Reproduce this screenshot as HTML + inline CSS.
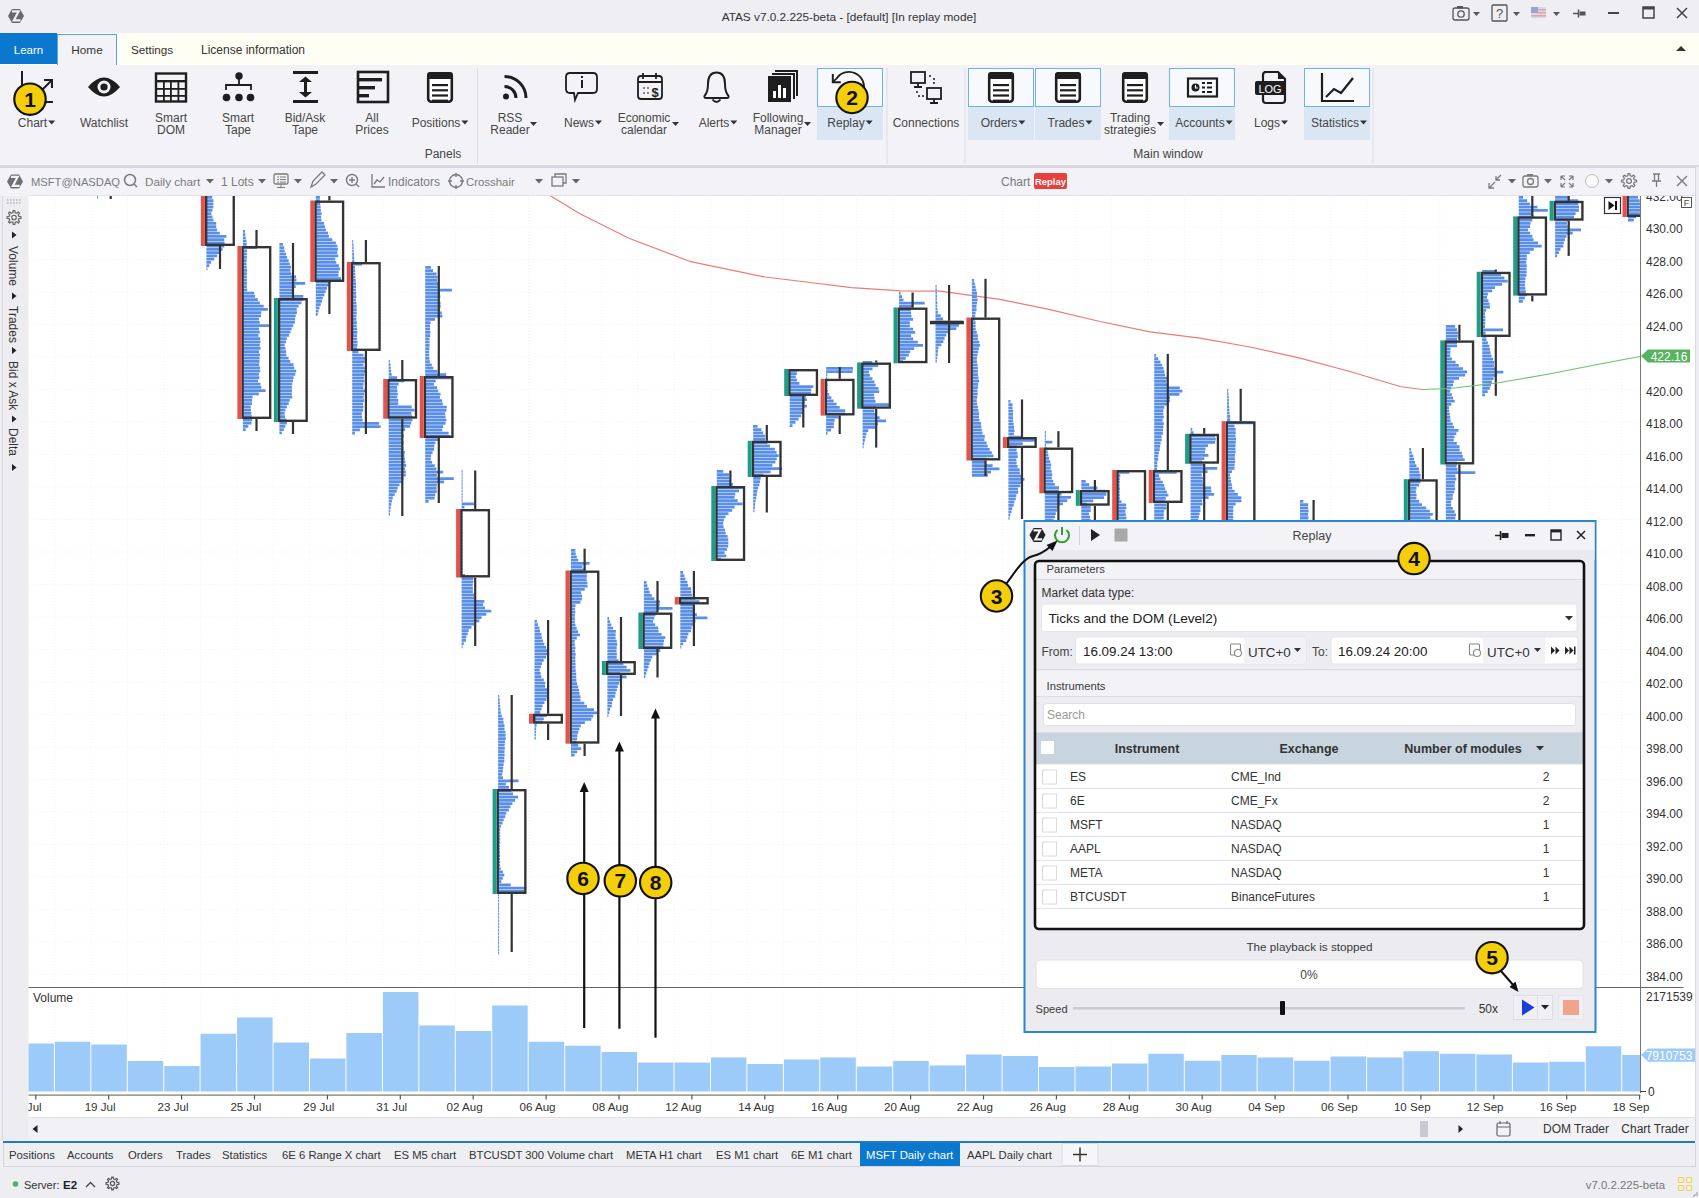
<!DOCTYPE html>
<html><head><meta charset="utf-8"><title>ATAS</title>
<style>html,body{margin:0;padding:0;width:1699px;height:1198px;overflow:hidden;background:#efeef3}
svg{display:block;font-family:"Liberation Sans",sans-serif}</style></head>
<body><svg width="1699" height="1198" viewBox="0 0 1699 1198"><rect x="0" y="0" width="1699" height="33" fill="#efeef3"/><path d="M8.00 16.00L12.00 9.00H20.00L24.00 16.00L20.00 23.00H12.00Z" fill="#68686f"/><path d="M12.00 11.40H18.60L13.80 20.40H20.60" fill="none" stroke="#efeef3" stroke-width="2.20"/><text x="849" y="21" font-size="11.8" fill="#333" text-anchor="middle" font-weight="normal" >ATAS v7.0.2.225-beta - [default] [In replay mode]</text><rect x="1453" y="8" width="16" height="12" rx="2" fill="none" stroke="#555" stroke-width="1.3"/><circle cx="1461" cy="14" r="3.2" fill="none" stroke="#555" stroke-width="1.3"/><rect x="1457" y="6" width="6" height="2.5" fill="#555"/><path d="M1473 12h7l-3.5 4z" fill="#555"/><rect x="1492" y="5" width="15" height="16" rx="1" fill="none" stroke="#555" stroke-width="1.3"/><text x="1499.5" y="18" font-size="13" fill="#555" text-anchor="middle" font-weight="normal" >?</text><path d="M1513 12h7l-3.5 4z" fill="#555"/><rect x="1531" y="7" width="15" height="11" fill="#d8d8e8"/><rect x="1531" y="7" width="7" height="6" fill="#9aa3c8"/><rect x="1531" y="15" width="15" height="1.5" fill="#e2a4a4"/><rect x="1538" y="9" width="8" height="1.5" fill="#e2a4a4"/><rect x="1538" y="12" width="8" height="1.5" fill="#e2a4a4"/><path d="M1553 12h7l-3.5 4z" fill="#555"/><path d="M1573 13.5h5M1578.5 9.5v8" stroke="#555" stroke-width="1.5"/><rect x="1579.5" y="11.5" width="6" height="4" fill="#555"/><rect x="1608" y="12" width="11" height="2" fill="#444"/><rect x="1643" y="7" width="11" height="11" fill="none" stroke="#444" stroke-width="1.5"/><rect x="1643" y="7" width="11" height="2.5" fill="#444"/><path d="M1677 8 l10 10 M1687 8 l-10 10" stroke="#444" stroke-width="1.5"/><rect x="0" y="33" width="1699" height="32" fill="#fffef4"/><rect x="0" y="33" width="57" height="31" fill="#0b78d0"/><text x="28.5" y="54" font-size="11.5" fill="#fff" text-anchor="middle" font-weight="normal" >Learn</text><rect x="57.5" y="34.5" width="59" height="31" fill="#f3f3f7" stroke="#5aa3e0" stroke-width="1"/><rect x="58" y="63" width="58" height="4" fill="#f3f3f7"/><text x="87" y="54" font-size="11.8" fill="#333" text-anchor="middle" font-weight="normal" >Home</text><text x="152" y="54" font-size="11.7" fill="#333" text-anchor="middle" font-weight="normal" >Settings</text><text x="253" y="54" font-size="12" fill="#333" text-anchor="middle" font-weight="normal" >License information</text><path d="M1676 51 h10 l-5 -5z" fill="#333"/><rect x="0" y="65" width="1699" height="101" fill="#f3f3f7"/><rect x="0" y="165" width="1699" height="2" fill="#d9d9e3"/><rect x="817" y="106" width="66" height="34" fill="#dae6f4"/><rect x="817.5" y="68.5" width="65" height="38" fill="#f7f9fc" stroke="#6fb3e6" stroke-width="1"/><rect x="968" y="106" width="66" height="34" fill="#dae6f4"/><rect x="968.5" y="68.5" width="65" height="38" fill="#f7f9fc" stroke="#6fb3e6" stroke-width="1"/><rect x="1035" y="106" width="66" height="34" fill="#dae6f4"/><rect x="1035.5" y="68.5" width="65" height="38" fill="#f7f9fc" stroke="#6fb3e6" stroke-width="1"/><rect x="1169" y="106" width="66" height="34" fill="#dae6f4"/><rect x="1169.5" y="68.5" width="65" height="38" fill="#f7f9fc" stroke="#6fb3e6" stroke-width="1"/><rect x="1304" y="106" width="66" height="34" fill="#dae6f4"/><rect x="1304.5" y="68.5" width="65" height="38" fill="#f7f9fc" stroke="#6fb3e6" stroke-width="1"/><rect x="477" y="68" width="1" height="96" fill="#dcdce4"/><rect x="886.5" y="68" width="1" height="96" fill="#dcdce4"/><rect x="964.5" y="68" width="1" height="96" fill="#dcdce4"/><rect x="1372.5" y="68" width="1" height="96" fill="#dcdce4"/><path d="M22 71 V102 H53" fill="none" stroke="#1e1e1e" stroke-width="2"/><path d="M39 93 L51 81 M44 80 H52 V88" fill="none" stroke="#1e1e1e" stroke-width="2"/><text x="32.5" y="126.5" font-size="12" fill="#454545" text-anchor="middle" font-weight="normal" >Chart</text><path d="M48.171875 120.5h7l-3.5 4z" fill="#333"/><path d="M88 87 Q104 68 120 87 Q104 106 88 87Z" fill="#1e1e1e"/><circle cx="104" cy="87" r="6.5" fill="#f3f3f7"/><circle cx="104" cy="87" r="3.6" fill="#1e1e1e"/><text x="104" y="126.5" font-size="12" fill="#454545" text-anchor="middle" font-weight="normal" >Watchlist</text><rect x="156" y="73.5" width="30" height="28" fill="none" stroke="#1e1e1e" stroke-width="2.4"/><rect x="156" y="80" width="30" height="2.4" fill="#1e1e1e"/><rect x="156" y="88" width="30" height="1.8" fill="#1e1e1e"/><rect x="156" y="95" width="30" height="1.8" fill="#1e1e1e"/><rect x="163" y="81" width="1.8" height="20" fill="#1e1e1e"/><rect x="170" y="81" width="1.8" height="20" fill="#1e1e1e"/><rect x="177.5" y="81" width="1.8" height="20" fill="#1e1e1e"/><text x="171" y="121.5" font-size="12" fill="#454545" text-anchor="middle" font-weight="normal" >Smart</text><text x="171" y="133.5" font-size="12" fill="#454545" text-anchor="middle" font-weight="normal" >DOM</text><circle cx="239" cy="76" r="3.7" fill="#1e1e1e"/><path d="M239 79 V86 M226 90 V85 H251 V90" fill="none" stroke="#1e1e1e" stroke-width="1.8"/><circle cx="226.5" cy="97.5" r="3.8" fill="#1e1e1e"/><circle cx="239" cy="97.5" r="3.8" fill="#1e1e1e"/><circle cx="250.5" cy="97.5" r="3.8" fill="#1e1e1e"/><text x="238" y="121.5" font-size="12" fill="#454545" text-anchor="middle" font-weight="normal" >Smart</text><text x="238" y="133.5" font-size="12" fill="#454545" text-anchor="middle" font-weight="normal" >Tape</text><rect x="293" y="71" width="25" height="3" fill="#1e1e1e"/><rect x="293" y="100" width="25" height="3" fill="#1e1e1e"/><path d="M305.5 79 V95" stroke="#1e1e1e" stroke-width="3"/><path d="M299 82 L305.5 76.5 L312 82Z M299 92 L305.5 97.5 L312 92Z" fill="#1e1e1e"/><text x="305" y="121.5" font-size="12" fill="#454545" text-anchor="middle" font-weight="normal" >Bid/Ask</text><text x="305" y="133.5" font-size="12" fill="#454545" text-anchor="middle" font-weight="normal" >Tape</text><rect x="358" y="72" width="30" height="30" fill="none" stroke="#1e1e1e" stroke-width="2.6"/><rect x="359" y="78" width="23" height="3.4" fill="#1e1e1e"/><rect x="359" y="86" width="16" height="3.4" fill="#1e1e1e"/><rect x="359" y="94" width="10" height="3.4" fill="#1e1e1e"/><text x="372" y="121.5" font-size="12" fill="#454545" text-anchor="middle" font-weight="normal" >All</text><text x="372" y="133.5" font-size="12" fill="#454545" text-anchor="middle" font-weight="normal" >Prices</text><rect x="428.2" y="73.2" width="23.6" height="28.6" rx="3" fill="#fff" stroke="#1e1e1e" stroke-width="2.6"/><rect x="427.0" y="72" width="26" height="7" rx="3" fill="#1e1e1e"/><rect x="432.0" y="84.0" width="16" height="2.2" fill="#1e1e1e"/><rect x="432.0" y="89.2" width="16" height="2.2" fill="#1e1e1e"/><rect x="432.0" y="94.4" width="16" height="2.2" fill="#1e1e1e"/><rect x="432.0" y="99.6" width="16" height="2.2" fill="#1e1e1e"/><text x="436" y="126.5" font-size="12" fill="#454545" text-anchor="middle" font-weight="normal" >Positions</text><path d="M461.34375 120.5h7l-3.5 4z" fill="#333"/><circle cx="506" cy="96.5" r="3" fill="#1e1e1e"/><path d="M504.5 86.5 A11.5 11.5 0 0 1 516 98 M504.5 76.5 A21.5 21.5 0 0 1 526 98" fill="none" stroke="#1e1e1e" stroke-width="3"/><text x="510" y="121.5" font-size="12" fill="#454545" text-anchor="middle" font-weight="normal" >RSS</text><text x="510" y="133.5" font-size="12" fill="#454545" text-anchor="middle" font-weight="normal" >Reader</text><path d="M530 122h7l-3.5 4z" fill="#333"/><path d="M570 73 H593 Q597 73 597 77 V89 Q597 93 593 93 H578 L575 100 L574 93 H570 Q566 93 566 89 V77 Q566 73 570 73Z" fill="none" stroke="#1e1e1e" stroke-width="1.8"/><rect x="581" y="80" width="2" height="8" fill="#1e1e1e"/><rect x="581" y="76" width="2" height="2" fill="#1e1e1e"/><text x="579" y="126.5" font-size="12" fill="#454545" text-anchor="middle" font-weight="normal" >News</text><path d="M595.0078125 120.5h7l-3.5 4z" fill="#333"/><rect x="638" y="76" width="24" height="23" rx="3" fill="none" stroke="#1e1e1e" stroke-width="1.8"/><path d="M638 82 H662 M643 73 V79 M656 73 V79" stroke="#1e1e1e" stroke-width="1.8"/><text x="655" y="97" font-size="13" font-weight="bold" fill="#1e1e1e" text-anchor="middle">$</text><path d="M643 88h2M647 88h2M643 93h2M647 93h2" stroke="#1e1e1e" stroke-width="1.2"/><text x="644" y="121.5" font-size="12" fill="#454545" text-anchor="middle" font-weight="normal" >Economic</text><text x="644" y="133.5" font-size="12" fill="#454545" text-anchor="middle" font-weight="normal" >calendar</text><path d="M672 122h7l-3.5 4z" fill="#333"/><path d="M716.5 72.5 Q708 72.5 708 84 Q708 92 704.5 96 Q704 98 706 98 H727 Q729 98 728.5 96 Q725 92 725 84 Q725 72.5 716.5 72.5Z" fill="none" stroke="#1e1e1e" stroke-width="2"/><path d="M712.5 99.5 Q716.5 104.5 720.5 99.5" fill="none" stroke="#1e1e1e" stroke-width="2"/><text x="714" y="126.5" font-size="12" fill="#454545" text-anchor="middle" font-weight="normal" >Alerts</text><path d="M730.3359375 120.5h7l-3.5 4z" fill="#333"/><rect x="768" y="76" width="23" height="26" fill="#1e1e1e"/><path d="M772 74 H794 V99 M775 71 H797 V96" fill="none" stroke="#1e1e1e" stroke-width="2"/><rect x="773" y="91" width="3" height="7" fill="#fff"/><rect x="778" y="85" width="3" height="13" fill="#fff"/><rect x="783" y="88" width="3" height="10" fill="#fff"/><text x="778" y="121.5" font-size="12" fill="#454545" text-anchor="middle" font-weight="normal" >Following</text><text x="778" y="133.5" font-size="12" fill="#454545" text-anchor="middle" font-weight="normal" >Manager</text><path d="M804 122h7l-3.5 4z" fill="#333"/><path d="M833.5 81.8 Q834.8 80 836.7 78.4 A15 15 0 0 1 863.5 90.9" fill="none" stroke="#1e1e1e" stroke-width="1.8"/><path d="M832.8 74 V82.3 H840.8" fill="none" stroke="#1e1e1e" stroke-width="2"/><text x="846" y="126.5" font-size="12" fill="#454545" text-anchor="middle" font-weight="normal" >Replay</text><path d="M865.6796875 120.5h7l-3.5 4z" fill="#333"/><rect x="911" y="72" width="14" height="11" fill="none" stroke="#1e1e1e" stroke-width="1.8"/><path d="M918 83 V87 M914 87 H922" stroke="#1e1e1e" stroke-width="1.8"/><rect x="927" y="88" width="14" height="11" fill="none" stroke="#1e1e1e" stroke-width="1.8"/><path d="M934 99 V103 M930 103 H938" stroke="#1e1e1e" stroke-width="1.8"/><path d="M929 76 H933 M934 78 V84 M917 91 V95 M918 96 H924" stroke="#1e1e1e" stroke-width="1.5" stroke-dasharray="2 2"/><text x="926" y="126.5" font-size="12" fill="#454545" text-anchor="middle" font-weight="normal" >Connections</text><rect x="989.2" y="73.2" width="23.6" height="28.6" rx="3" fill="#fff" stroke="#1e1e1e" stroke-width="2.6"/><rect x="988.0" y="72" width="26" height="7" rx="3" fill="#1e1e1e"/><rect x="993.0" y="84.0" width="16" height="2.2" fill="#1e1e1e"/><rect x="993.0" y="89.2" width="16" height="2.2" fill="#1e1e1e"/><rect x="993.0" y="94.4" width="16" height="2.2" fill="#1e1e1e"/><rect x="993.0" y="99.6" width="16" height="2.2" fill="#1e1e1e"/><text x="999" y="126.5" font-size="12" fill="#454545" text-anchor="middle" font-weight="normal" >Orders</text><path d="M1018.3359375 120.5h7l-3.5 4z" fill="#333"/><rect x="1056.2" y="73.2" width="23.6" height="28.6" rx="3" fill="#fff" stroke="#1e1e1e" stroke-width="2.6"/><rect x="1055.0" y="72" width="26" height="7" rx="3" fill="#1e1e1e"/><rect x="1060.0" y="84.0" width="16" height="2.2" fill="#1e1e1e"/><rect x="1060.0" y="89.2" width="16" height="2.2" fill="#1e1e1e"/><rect x="1060.0" y="94.4" width="16" height="2.2" fill="#1e1e1e"/><rect x="1060.0" y="99.6" width="16" height="2.2" fill="#1e1e1e"/><text x="1066" y="126.5" font-size="12" fill="#454545" text-anchor="middle" font-weight="normal" >Trades</text><path d="M1085.453125 120.5h7l-3.5 4z" fill="#333"/><rect x="1123.2" y="73.2" width="23.6" height="28.6" rx="3" fill="#fff" stroke="#1e1e1e" stroke-width="2.6"/><rect x="1122.0" y="72" width="26" height="7" rx="3" fill="#1e1e1e"/><rect x="1127.0" y="84.0" width="16" height="2.2" fill="#1e1e1e"/><rect x="1127.0" y="89.2" width="16" height="2.2" fill="#1e1e1e"/><rect x="1127.0" y="94.4" width="16" height="2.2" fill="#1e1e1e"/><rect x="1127.0" y="99.6" width="16" height="2.2" fill="#1e1e1e"/><text x="1130" y="121.5" font-size="12" fill="#454545" text-anchor="middle" font-weight="normal" >Trading</text><text x="1130" y="133.5" font-size="12" fill="#454545" text-anchor="middle" font-weight="normal" >strategies</text><path d="M1157 122h7l-3.5 4z" fill="#333"/><rect x="1188" y="78.5" width="29" height="18" fill="none" stroke="#1e1e1e" stroke-width="2.2"/><circle cx="1195.5" cy="87.5" r="4" fill="#1e1e1e"/><path d="M1195.5 85 V88 H1198" stroke="#fff" stroke-width="1.2" fill="none"/><path d="M1202 83h3M1207 83h5M1202 87.5h3M1207 87.5h5M1202 92h3M1207 92h5" stroke="#1e1e1e" stroke-width="1.8"/><text x="1200" y="126.5" font-size="12" fill="#454545" text-anchor="middle" font-weight="normal" >Accounts</text><path d="M1225.671875 120.5h7l-3.5 4z" fill="#333"/><path d="M1264 72 H1278 L1285 79 V100 Q1285 103 1282 103 H1266 Q1263 103 1263 100 V75 Q1263 72 1266 72Z" fill="none" stroke="#1e1e1e" stroke-width="2.2"/><path d="M1278 72 L1285 79 H1278Z" fill="#1e1e1e"/><rect x="1255" y="81" width="31" height="14" rx="2" fill="#1e1e1e"/><text x="1270" y="93" font-size="11" fill="#fff" text-anchor="middle">LOG</text><text x="1267" y="126.5" font-size="12" fill="#454545" text-anchor="middle" font-weight="normal" >Logs</text><path d="M1281.0078125 120.5h7l-3.5 4z" fill="#333"/><path d="M1322 73 V101 H1354 M1326 97 L1334 89 L1341 93 L1353 78" fill="none" stroke="#1e1e1e" stroke-width="2.2"/><text x="1335" y="126.5" font-size="12" fill="#454545" text-anchor="middle" font-weight="normal" >Statistics</text><path d="M1360.0 120.5h7l-3.5 4z" fill="#333"/><text x="443" y="158" font-size="12" fill="#454545" text-anchor="middle" font-weight="normal" >Panels</text><text x="1168" y="158" font-size="12" fill="#454545" text-anchor="middle" font-weight="normal" >Main window</text><rect x="0" y="167" width="1699" height="29" fill="#f3f3f7"/><rect x="0" y="167" width="1699" height="1" fill="#d6d6e0"/><path d="M7.00 181.50L11.00 174.50H19.00L23.00 181.50L19.00 188.50H11.00Z" fill="#707070"/><path d="M11.00 176.90H17.60L12.80 185.90H19.60" fill="none" stroke="#f3f3f7" stroke-width="2.20"/><text x="31" y="186" font-size="11.2" fill="#7a7a7a" text-anchor="start" font-weight="normal" >MSFT@NASDAQ</text><circle cx="130" cy="180" r="5.5" fill="none" stroke="#7a7a7a" stroke-width="1.5"/><path d="M134 184 L137 187" stroke="#7a7a7a" stroke-width="1.5"/><text x="145" y="186" font-size="11.7" fill="#7a7a7a" text-anchor="start" font-weight="normal" >Daily chart</text><path d="M206 179h8l-4.0 4.5z" fill="#666"/><text x="221" y="186" font-size="12" fill="#7a7a7a" text-anchor="start" font-weight="normal" >1 Lots</text><path d="M258 179h8l-4.0 4.5z" fill="#666"/><rect x="274" y="174" width="14" height="10" rx="1.5" fill="none" stroke="#7a7a7a" stroke-width="1.3"/><path d="M281 184 V187 M277 187.5 H285 M277 177h2M280 177h6M277 179.5h2M280 179.5h6M277 182h2M280 182h6" stroke="#7a7a7a" stroke-width="1"/><path d="M294 179h8l-4.0 4.5z" fill="#666"/><path d="M311 187 L313 181 L322 172 L325 175 L316 184 Z" fill="none" stroke="#7a7a7a" stroke-width="1.3"/><path d="M330 179h8l-4.0 4.5z" fill="#666"/><circle cx="352" cy="180" r="5.5" fill="none" stroke="#7a7a7a" stroke-width="1.4"/><path d="M349 180h6M352 177v6M356 184 L359 187" stroke="#7a7a7a" stroke-width="1.4"/><path d="M372 174 V187 H385 M374 184 L377 180 L380 182 L384 177" fill="none" stroke="#7a7a7a" stroke-width="1.3"/><text x="388" y="186" font-size="12" fill="#7a7a7a" text-anchor="start" font-weight="normal" >Indicators</text><circle cx="456" cy="181" r="6.5" fill="none" stroke="#7a7a7a" stroke-width="1.4"/><path d="M456 173v4M456 185v4M448 181h4M460 181h4" stroke="#7a7a7a" stroke-width="1.4"/><text x="466" y="186" font-size="11.4" fill="#7a7a7a" text-anchor="start" font-weight="normal" >Crosshair</text><path d="M535 179h8l-4.0 4.5z" fill="#666"/><rect x="552" y="177" width="11" height="9" fill="none" stroke="#7a7a7a" stroke-width="1.3"/><path d="M555 177 V174 H566 V183 H563" fill="none" stroke="#7a7a7a" stroke-width="1.3"/><path d="M572 179h8l-4.0 4.5z" fill="#666"/><text x="1001" y="186" font-size="12" fill="#7a7a7a" text-anchor="start" font-weight="normal" >Chart</text><rect x="1034" y="173" width="33" height="16" rx="2" fill="#e8403c"/><text x="1050.5" y="185" font-size="9.5" fill="#fff" text-anchor="middle" font-weight="bold" >Replay</text><path d="M1489 188 L1495 182 M1489 183 V188 H1494 M1501 175 L1496 180 M1496 176 V180 H1500" fill="none" stroke="#7a7a7a" stroke-width="1.3"/><path d="M1508 179h8l-4.0 4.5z" fill="#666"/><rect x="1523" y="176" width="15" height="11" rx="2" fill="none" stroke="#7a7a7a" stroke-width="1.3"/><circle cx="1530.5" cy="181.5" r="3" fill="none" stroke="#7a7a7a" stroke-width="1.3"/><rect x="1527" y="174" width="6" height="2" fill="#7a7a7a"/><path d="M1544 179h8l-4.0 4.5z" fill="#666"/><path d="M1561 176 h4 M1561 176 v4 M1573 176 h-4 M1573 176 v4 M1561 187 h4 M1561 187 v-4 M1573 187 h-4 M1573 187 v-4 M1561 176 l4 4 M1573 176 l-4 4 M1561 187 l4 -4 M1573 187 l-4 -4" stroke="#7a7a7a" stroke-width="1.2"/><circle cx="1592" cy="181" r="6.5" fill="#fafafa" stroke="#bbb" stroke-width="1"/><path d="M1605 179h8l-4.0 4.5z" fill="#666"/><path d="M1634.27 179.82L1636.45 180.10L1636.45 181.90L1634.27 182.18L1633.56 183.89L1634.90 185.63L1633.63 186.90L1631.89 185.56L1630.18 186.27L1629.90 188.45L1628.10 188.45L1627.82 186.27L1626.11 185.56L1624.37 186.90L1623.10 185.63L1624.44 183.89L1623.73 182.18L1621.55 181.90L1621.55 180.10L1623.73 179.82L1624.44 178.11L1623.10 176.37L1624.37 175.10L1626.11 176.44L1627.82 175.73L1628.10 173.55L1629.90 173.55L1630.18 175.73L1631.89 176.44L1633.63 175.10L1634.90 176.37L1633.56 178.11Z" fill="none" stroke="#7a7a7a" stroke-width="1.3" stroke-linejoin="round"/><circle cx="1629" cy="181" r="2.40" fill="none" stroke="#7a7a7a" stroke-width="1.3"/><path d="M1653 174 h7 M1654.5 174 v7 M1658.5 174 v7 M1652 181 h9 M1656.5 181 v6" stroke="#7a7a7a" stroke-width="1.3"/><path d="M1677 176 l10 10 M1687 176 l-10 10" stroke="#7a7a7a" stroke-width="1.4"/><rect x="0" y="196" width="28.5" height="945" fill="#ececf1"/><rect x="2" y="196" width="1" height="945" fill="#dadae2"/><rect x="28.5" y="196" width="1670.5" height="921" fill="#fff"/><path d="M54.7 196V987M54.7 988V1092M91.1 196V987M91.1 988V1092M127.6 196V987M127.6 988V1092M164.0 196V987M164.0 988V1092M200.4 196V987M200.4 988V1092M236.9 196V987M236.9 988V1092M273.4 196V987M273.4 988V1092M309.8 196V987M309.8 988V1092M346.2 196V987M346.2 988V1092M382.7 196V987M382.7 988V1092M419.2 196V987M419.2 988V1092M455.6 196V987M455.6 988V1092M492.1 196V987M492.1 988V1092M528.5 196V987M528.5 988V1092M565.0 196V987M565.0 988V1092M601.4 196V987M601.4 988V1092M637.9 196V987M637.9 988V1092M674.3 196V987M674.3 988V1092M710.8 196V987M710.8 988V1092M747.2 196V987M747.2 988V1092M783.7 196V987M783.7 988V1092M820.1 196V987M820.1 988V1092M856.6 196V987M856.6 988V1092M893.0 196V987M893.0 988V1092M929.5 196V987M929.5 988V1092M965.9 196V987M965.9 988V1092M1002.4 196V987M1002.4 988V1092M1038.8 196V987M1038.8 988V1092M1075.3 196V987M1075.3 988V1092M1111.7 196V987M1111.7 988V1092M1148.2 196V987M1148.2 988V1092M1184.6 196V987M1184.6 988V1092M1221.1 196V987M1221.1 988V1092M1257.5 196V987M1257.5 988V1092M1294.0 196V987M1294.0 988V1092M1330.4 196V987M1330.4 988V1092M1366.9 196V987M1366.9 988V1092M1403.3 196V987M1403.3 988V1092M1439.8 196V987M1439.8 988V1092M1476.2 196V987M1476.2 988V1092M1512.7 196V987M1512.7 988V1092M1549.1 196V987M1549.1 988V1092M1585.6 196V987M1585.6 988V1092M1622.0 196V987M1622.0 988V1092M28.5 974.5H1640M28.5 942.0H1640M28.5 909.5H1640M28.5 877.0H1640M28.5 844.5H1640M28.5 812.0H1640M28.5 779.5H1640M28.5 747.0H1640M28.5 714.5H1640M28.5 682.0H1640M28.5 649.5H1640M28.5 617.0H1640M28.5 584.5H1640M28.5 552.0H1640M28.5 519.5H1640M28.5 487.0H1640M28.5 454.5H1640M28.5 422.0H1640M28.5 389.5H1640M28.5 357.0H1640M28.5 324.5H1640M28.5 292.0H1640M28.5 259.5H1640M28.5 227.0H1640" stroke="#f2f2f2" stroke-width="1" stroke-dasharray="1 2"/><defs><clipPath id="cc"><rect x="28.5" y="196" width="1611.5" height="791"/></clipPath><clipPath id="cv"><rect x="28.5" y="988" width="1611.5" height="104"/></clipPath></defs><g clip-path="url(#cc)"><polyline points="549.8,195.4 579.4,213.5 628.9,238.2 690.7,261.7 764.9,277 802,281.5 851.4,287.7 900.8,290.9 940,291.2 1000,299.4 1050,309.7 1100,321.5 1150,331.8 1200,338.2 1250,347 1300,358.2 1350,371.5 1380,380.5 1400,386.5 1422,389.5" fill="none" stroke="#f07878" stroke-width="1.2"/><rect x="95.6" y="150.0" width="30.0" height="40.0" fill="#fff"/><path d="M97.1 196.00h1.0v2.85h-1.0z" fill="#5a8fe9"/><rect x="109.6" y="190.0" width="2.2" height="9.0" fill="#333"/><rect x="96.80" y="151.20" width="27.60" height="37.60" fill="none" stroke="#333" stroke-width="2.35"/><rect x="91.6" y="150.0" width="4" height="40.0" fill="#e8504a"/><rect x="204.9" y="150.0" width="30.0" height="96.0" fill="#fff"/><path d="M206.4 196.00h5.9v2.85h-5.9zM206.4 199.25h7.0v2.85h-7.0zM206.4 202.50h7.0v2.85h-7.0zM206.4 205.75h6.9v2.85h-6.9zM206.4 209.00h6.0v2.85h-6.0zM206.4 212.25h4.9v2.85h-4.9zM206.4 215.50h6.1v2.85h-6.1zM206.4 218.75h7.1v2.85h-7.1zM206.4 222.00h9.9v2.85h-9.9zM206.4 225.25h9.8v2.85h-9.8zM206.4 228.50h10.7v2.85h-10.7zM206.4 231.75h13.4v2.85h-13.4zM206.4 235.00h20.0v2.85h-20.0zM206.4 238.25h17.9v2.85h-17.9zM206.4 241.50h18.2v2.85h-18.2zM206.4 244.75h17.8v2.85h-17.8zM206.4 248.00h16.1v2.85h-16.1zM206.4 251.25h12.7v2.85h-12.7zM206.4 254.50h10.8v2.85h-10.8zM206.4 257.75h7.8v2.85h-7.8zM206.4 261.00h4.6v2.85h-4.6zM206.4 264.25h2.9v2.85h-2.9zM206.4 267.50h1.0v2.85h-1.0z" fill="#5a8fe9"/><rect x="218.9" y="246.0" width="2.2" height="23.0" fill="#333"/><rect x="206.15" y="151.20" width="27.60" height="93.60" fill="none" stroke="#333" stroke-width="2.35"/><rect x="200.9" y="150.0" width="4" height="96.0" fill="#e8504a"/><rect x="241.4" y="246.0" width="30.0" height="173.0" fill="#fff"/><path d="M242.9 230.00h2.1v2.85h-2.1zM242.9 233.25h2.4v2.85h-2.4zM242.9 236.50h2.9v2.85h-2.9zM242.9 239.75h3.6v2.85h-3.6zM242.9 243.00h3.8v2.85h-3.8zM242.9 246.25h14.2v2.85h-14.2zM242.9 249.50h4.1v2.85h-4.1zM242.9 252.75h3.9v2.85h-3.9zM242.9 256.00h4.0v2.85h-4.0zM242.9 259.25h3.7v2.85h-3.7zM242.9 262.50h3.7v2.85h-3.7zM242.9 265.75h3.8v2.85h-3.8zM242.9 269.00h4.1v2.85h-4.1zM242.9 272.25h4.0v2.85h-4.0zM242.9 275.50h3.9v2.85h-3.9zM242.9 278.75h4.1v2.85h-4.1zM242.9 282.00h4.0v2.85h-4.0zM242.9 285.25h3.9v2.85h-3.9zM242.9 288.50h4.4v2.85h-4.4zM242.9 291.75h11.4v2.85h-11.4zM242.9 295.00h12.2v2.85h-12.2zM242.9 298.25h14.9v2.85h-14.9zM242.9 301.50h16.9v2.85h-16.9zM242.9 304.75h20.8v2.85h-20.8zM242.9 308.00h24.9v2.85h-24.9zM242.9 311.25h18.3v2.85h-18.3zM242.9 314.50h18.3v2.85h-18.3zM242.9 317.75h16.0v2.85h-16.0zM242.9 321.00h16.8v2.85h-16.8zM242.9 324.25h28.1v2.85h-28.1zM242.9 327.50h16.1v2.85h-16.1zM242.9 330.75h16.9v2.85h-16.9zM242.9 334.00h15.6v2.85h-15.6zM242.9 337.25h17.3v2.85h-17.3zM242.9 340.50h17.5v2.85h-17.5zM242.9 343.75h16.9v2.85h-16.9zM242.9 347.00h17.6v2.85h-17.6zM242.9 350.25h16.1v2.85h-16.1zM242.9 353.50h17.0v2.85h-17.0zM242.9 356.75h16.7v2.85h-16.7zM242.9 360.00h16.6v2.85h-16.6zM242.9 363.25h16.2v2.85h-16.2zM242.9 366.50h17.1v2.85h-17.1zM242.9 369.75h17.3v2.85h-17.3zM242.9 373.00h16.0v2.85h-16.0zM242.9 376.25h16.5v2.85h-16.5zM242.9 379.50h15.1v2.85h-15.1zM242.9 382.75h17.6v2.85h-17.6zM242.9 386.00h18.4v2.85h-18.4zM242.9 389.25h22.7v2.85h-22.7zM242.9 392.50h15.9v2.85h-15.9zM242.9 395.75h9.7v2.85h-9.7zM242.9 399.00h9.2v2.85h-9.2zM242.9 402.25h9.1v2.85h-9.1zM242.9 405.50h7.8v2.85h-7.8zM242.9 408.75h8.0v2.85h-8.0zM242.9 412.00h8.3v2.85h-8.3zM242.9 415.25h8.9v2.85h-8.9zM242.9 418.50h9.3v2.85h-9.3zM242.9 421.75h8.6v2.85h-8.6zM242.9 425.00h5.4v2.85h-5.4zM242.9 428.25h2.8v2.85h-2.8z" fill="#5a8fe9"/><rect x="255.4" y="230.0" width="2.2" height="16.0" fill="#333"/><rect x="255.4" y="419.0" width="2.2" height="12.0" fill="#333"/><rect x="242.60" y="247.20" width="27.60" height="170.60" fill="none" stroke="#333" stroke-width="2.35"/><rect x="237.4" y="246.0" width="4" height="173.0" fill="#e8504a"/><rect x="277.9" y="298.0" width="30.0" height="124.0" fill="#fff"/><path d="M279.4 243.00h3.5v2.85h-3.5zM279.4 246.25h4.8v2.85h-4.8zM279.4 249.50h5.2v2.85h-5.2zM279.4 252.75h6.6v2.85h-6.6zM279.4 256.00h7.7v2.85h-7.7zM279.4 259.25h9.3v2.85h-9.3zM279.4 262.50h10.3v2.85h-10.3zM279.4 265.75h11.6v2.85h-11.6zM279.4 269.00h11.0v2.85h-11.0zM279.4 272.25h11.8v2.85h-11.8zM279.4 275.50h16.6v2.85h-16.6zM279.4 278.75h17.1v2.85h-17.1zM279.4 282.00h25.8v2.85h-25.8zM279.4 285.25h16.3v2.85h-16.3zM279.4 288.50h13.2v2.85h-13.2zM279.4 291.75h14.3v2.85h-14.3zM279.4 295.00h23.9v2.85h-23.9zM279.4 298.25h23.8v2.85h-23.8zM279.4 301.50h22.1v2.85h-22.1zM279.4 304.75h19.2v2.85h-19.2zM279.4 308.00h17.3v2.85h-17.3zM279.4 311.25h17.5v2.85h-17.5zM279.4 314.50h16.3v2.85h-16.3zM279.4 317.75h15.7v2.85h-15.7zM279.4 321.00h15.5v2.85h-15.5zM279.4 324.25h13.8v2.85h-13.8zM279.4 327.50h12.3v2.85h-12.3zM279.4 330.75h11.1v2.85h-11.1zM279.4 334.00h9.6v2.85h-9.6zM279.4 337.25h7.3v2.85h-7.3zM279.4 340.50h6.7v2.85h-6.7zM279.4 343.75h5.3v2.85h-5.3zM279.4 347.00h6.1v2.85h-6.1zM279.4 350.25h6.7v2.85h-6.7zM279.4 353.50h7.0v2.85h-7.0zM279.4 356.75h9.2v2.85h-9.2zM279.4 360.00h10.9v2.85h-10.9zM279.4 363.25h14.1v2.85h-14.1zM279.4 366.50h14.9v2.85h-14.9zM279.4 369.75h16.8v2.85h-16.8zM279.4 373.00h15.9v2.85h-15.9zM279.4 376.25h14.2v2.85h-14.2zM279.4 379.50h13.6v2.85h-13.6zM279.4 382.75h12.8v2.85h-12.8zM279.4 386.00h12.5v2.85h-12.5zM279.4 389.25h12.6v2.85h-12.6zM279.4 392.50h12.4v2.85h-12.4zM279.4 395.75h12.8v2.85h-12.8zM279.4 399.00h10.3v2.85h-10.3zM279.4 402.25h9.3v2.85h-9.3zM279.4 405.50h7.5v2.85h-7.5zM279.4 408.75h6.0v2.85h-6.0zM279.4 412.00h5.2v2.85h-5.2zM279.4 415.25h5.7v2.85h-5.7zM279.4 418.50h7.0v2.85h-7.0zM279.4 421.75h7.5v2.85h-7.5zM279.4 425.00h6.0v2.85h-6.0zM279.4 428.25h4.4v2.85h-4.4zM279.4 431.50h2.4v2.85h-2.4z" fill="#5a8fe9"/><rect x="291.9" y="243.0" width="2.2" height="55.0" fill="#333"/><rect x="291.9" y="422.0" width="2.2" height="12.0" fill="#333"/><rect x="279.05" y="299.20" width="27.60" height="121.60" fill="none" stroke="#333" stroke-width="2.35"/><rect x="273.9" y="298.0" width="4" height="124.0" fill="#1f9e87"/><rect x="314.3" y="200.5" width="30.0" height="81.5" fill="#fff"/><path d="M315.8 196.00h4.1v2.85h-4.1zM315.8 199.25h4.1v2.85h-4.1zM315.8 202.50h4.4v2.85h-4.4zM315.8 205.75h4.8v2.85h-4.8zM315.8 209.00h5.0v2.85h-5.0zM315.8 212.25h5.8v2.85h-5.8zM315.8 215.50h5.4v2.85h-5.4zM315.8 218.75h5.7v2.85h-5.7zM315.8 222.00h8.2v2.85h-8.2zM315.8 225.25h9.2v2.85h-9.2zM315.8 228.50h10.1v2.85h-10.1zM315.8 231.75h12.3v2.85h-12.3zM315.8 235.00h13.1v2.85h-13.1zM315.8 238.25h16.5v2.85h-16.5zM315.8 241.50h20.1v2.85h-20.1zM315.8 244.75h21.6v2.85h-21.6zM315.8 248.00h22.1v2.85h-22.1zM315.8 251.25h21.5v2.85h-21.5zM315.8 254.50h22.5v2.85h-22.5zM315.8 257.75h19.4v2.85h-19.4zM315.8 261.00h20.5v2.85h-20.5zM315.8 264.25h23.1v2.85h-23.1zM315.8 267.50h24.3v2.85h-24.3zM315.8 270.75h22.9v2.85h-22.9zM315.8 274.00h22.7v2.85h-22.7zM315.8 277.25h25.2v2.85h-25.2zM315.8 280.50h15.1v2.85h-15.1zM315.8 283.75h13.0v2.85h-13.0zM315.8 287.00h11.2v2.85h-11.2zM315.8 290.25h9.9v2.85h-9.9zM315.8 293.50h8.6v2.85h-8.6zM315.8 296.75h6.9v2.85h-6.9zM315.8 300.00h6.1v2.85h-6.1zM315.8 303.25h4.9v2.85h-4.9zM315.8 306.50h3.7v2.85h-3.7zM315.8 309.75h2.7v2.85h-2.7zM315.8 313.00h1.9v2.85h-1.9z" fill="#5a8fe9"/><rect x="328.3" y="150.0" width="2.2" height="50.5" fill="#333"/><rect x="328.3" y="282.0" width="2.2" height="32.0" fill="#333"/><rect x="315.50" y="201.70" width="27.60" height="79.10" fill="none" stroke="#333" stroke-width="2.35"/><rect x="310.3" y="200.5" width="4" height="81.5" fill="#e8504a"/><rect x="350.8" y="262.0" width="30.0" height="89.0" fill="#fff"/><path d="M352.2 240.00h1.0v2.85h-1.0zM352.2 243.25h1.3v2.85h-1.3zM352.2 246.50h1.5v2.85h-1.5zM352.2 249.75h1.5v2.85h-1.5zM352.2 253.00h1.8v2.85h-1.8zM352.2 256.25h2.0v2.85h-2.0zM352.2 259.50h2.1v2.85h-2.1zM352.2 262.75h9.8v2.85h-9.8zM352.2 266.00h2.9v2.85h-2.9zM352.2 269.25h3.0v2.85h-3.0zM352.2 272.50h3.1v2.85h-3.1zM352.2 275.75h3.2v2.85h-3.2zM352.2 279.00h3.5v2.85h-3.5zM352.2 282.25h3.8v2.85h-3.8zM352.2 285.50h3.8v2.85h-3.8zM352.2 288.75h3.7v2.85h-3.7zM352.2 292.00h3.9v2.85h-3.9zM352.2 295.25h4.1v2.85h-4.1zM352.2 298.50h3.7v2.85h-3.7zM352.2 301.75h4.2v2.85h-4.2zM352.2 305.00h4.4v2.85h-4.4zM352.2 308.25h4.4v2.85h-4.4zM352.2 311.50h4.5v2.85h-4.5zM352.2 314.75h4.3v2.85h-4.3zM352.2 318.00h4.2v2.85h-4.2zM352.2 321.25h4.7v2.85h-4.7zM352.2 324.50h4.5v2.85h-4.5zM352.2 327.75h4.9v2.85h-4.9zM352.2 331.00h5.1v2.85h-5.1zM352.2 334.25h4.7v2.85h-4.7zM352.2 337.50h4.8v2.85h-4.8zM352.2 340.75h5.3v2.85h-5.3zM352.2 344.00h5.2v2.85h-5.2zM352.2 347.25h4.7v2.85h-4.7zM352.2 350.50h6.2v2.85h-6.2zM352.2 353.75h11.3v2.85h-11.3zM352.2 357.00h12.8v2.85h-12.8zM352.2 360.25h12.6v2.85h-12.6zM352.2 363.50h11.3v2.85h-11.3zM352.2 366.75h12.6v2.85h-12.6zM352.2 370.00h12.9v2.85h-12.9zM352.2 373.25h12.3v2.85h-12.3zM352.2 376.50h11.7v2.85h-11.7zM352.2 379.75h12.1v2.85h-12.1zM352.2 383.00h11.3v2.85h-11.3zM352.2 386.25h11.1v2.85h-11.1zM352.2 389.50h12.9v2.85h-12.9zM352.2 392.75h11.9v2.85h-11.9zM352.2 396.00h11.4v2.85h-11.4zM352.2 399.25h11.9v2.85h-11.9zM352.2 402.50h10.8v2.85h-10.8zM352.2 405.75h11.2v2.85h-11.2zM352.2 409.00h10.9v2.85h-10.9zM352.2 412.25h9.6v2.85h-9.6zM352.2 415.50h9.9v2.85h-9.9zM352.2 418.75h10.4v2.85h-10.4zM352.2 422.00h26.8v2.85h-26.8zM352.2 425.25h28.4v2.85h-28.4zM352.2 428.50h7.7v2.85h-7.7zM352.2 431.75h2.7v2.85h-2.7z" fill="#5a8fe9"/><rect x="364.8" y="240.0" width="2.2" height="22.0" fill="#333"/><rect x="364.8" y="351.0" width="2.2" height="83.0" fill="#333"/><rect x="351.95" y="263.20" width="27.60" height="86.60" fill="none" stroke="#333" stroke-width="2.35"/><rect x="346.8" y="262.0" width="4" height="89.0" fill="#e8504a"/><rect x="387.2" y="379.0" width="30.0" height="39.7" fill="#fff"/><path d="M388.7 360.00h1.1v2.85h-1.1zM388.7 363.25h1.7v2.85h-1.7zM388.7 366.50h2.0v2.85h-2.0zM388.7 369.75h2.4v2.85h-2.4zM388.7 373.00h3.0v2.85h-3.0zM388.7 376.25h8.4v2.85h-8.4zM388.7 379.50h15.8v2.85h-15.8zM388.7 382.75h9.9v2.85h-9.9zM388.7 386.00h8.3v2.85h-8.3zM388.7 389.25h8.7v2.85h-8.7zM388.7 392.50h9.0v2.85h-9.0zM388.7 395.75h8.6v2.85h-8.6zM388.7 399.00h9.6v2.85h-9.6zM388.7 402.25h9.5v2.85h-9.5zM388.7 405.50h23.0v2.85h-23.0zM388.7 408.75h25.8v2.85h-25.8zM388.7 412.00h22.7v2.85h-22.7zM388.7 415.25h23.3v2.85h-23.3zM388.7 418.50h23.7v2.85h-23.7zM388.7 421.75h22.5v2.85h-22.5zM388.7 425.00h21.4v2.85h-21.4zM388.7 428.25h16.5v2.85h-16.5zM388.7 431.50h14.2v2.85h-14.2zM388.7 434.75h15.0v2.85h-15.0zM388.7 438.00h13.6v2.85h-13.6zM388.7 441.25h14.9v2.85h-14.9zM388.7 444.50h14.4v2.85h-14.4zM388.7 447.75h14.7v2.85h-14.7zM388.7 451.00h16.1v2.85h-16.1zM388.7 454.25h15.7v2.85h-15.7zM388.7 457.50h16.2v2.85h-16.2zM388.7 460.75h16.8v2.85h-16.8zM388.7 464.00h17.5v2.85h-17.5zM388.7 467.25h16.4v2.85h-16.4zM388.7 470.50h17.1v2.85h-17.1zM388.7 473.75h17.0v2.85h-17.0zM388.7 477.00h14.9v2.85h-14.9zM388.7 480.25h13.3v2.85h-13.3zM388.7 483.50h10.8v2.85h-10.8zM388.7 486.75h9.0v2.85h-9.0zM388.7 490.00h8.0v2.85h-8.0zM388.7 493.25h6.0v2.85h-6.0zM388.7 496.50h4.1v2.85h-4.1zM388.7 499.75h3.2v2.85h-3.2zM388.7 503.00h2.6v2.85h-2.6zM388.7 506.25h1.9v2.85h-1.9zM388.7 509.50h1.6v2.85h-1.6zM388.7 512.75h1.3v2.85h-1.3z" fill="#5a8fe9"/><rect x="401.2" y="360.0" width="2.2" height="19.0" fill="#333"/><rect x="401.2" y="418.7" width="2.2" height="97.3" fill="#333"/><rect x="388.40" y="380.20" width="27.60" height="37.30" fill="none" stroke="#333" stroke-width="2.35"/><rect x="383.2" y="379.0" width="4" height="39.7" fill="#e8504a"/><rect x="423.7" y="376.0" width="30.0" height="62.0" fill="#fff"/><path d="M425.2 266.00h5.7v2.85h-5.7zM425.2 269.25h7.8v2.85h-7.8zM425.2 272.50h11.3v2.85h-11.3zM425.2 275.75h12.3v2.85h-12.3zM425.2 279.00h12.0v2.85h-12.0zM425.2 282.25h12.8v2.85h-12.8zM425.2 285.50h13.0v2.85h-13.0zM425.2 288.75h26.7v2.85h-26.7zM425.2 292.00h14.7v2.85h-14.7zM425.2 295.25h15.2v2.85h-15.2zM425.2 298.50h13.8v2.85h-13.8zM425.2 301.75h15.4v2.85h-15.4zM425.2 305.00h15.5v2.85h-15.5zM425.2 308.25h14.5v2.85h-14.5zM425.2 311.50h16.6v2.85h-16.6zM425.2 314.75h17.2v2.85h-17.2zM425.2 318.00h9.8v2.85h-9.8zM425.2 321.25h5.4v2.85h-5.4zM425.2 324.50h4.8v2.85h-4.8zM425.2 327.75h4.8v2.85h-4.8zM425.2 331.00h5.1v2.85h-5.1zM425.2 334.25h4.9v2.85h-4.9zM425.2 337.50h4.3v2.85h-4.3zM425.2 340.75h4.4v2.85h-4.4zM425.2 344.00h4.4v2.85h-4.4zM425.2 347.25h4.2v2.85h-4.2zM425.2 350.50h4.0v2.85h-4.0zM425.2 353.75h4.0v2.85h-4.0zM425.2 357.00h4.2v2.85h-4.2zM425.2 360.25h4.6v2.85h-4.6zM425.2 363.50h6.6v2.85h-6.6zM425.2 366.75h8.1v2.85h-8.1zM425.2 370.00h12.2v2.85h-12.2zM425.2 373.25h21.0v2.85h-21.0zM425.2 376.50h27.5v2.85h-27.5zM425.2 379.75h10.4v2.85h-10.4zM425.2 383.00h8.7v2.85h-8.7zM425.2 386.25h11.8v2.85h-11.8zM425.2 389.50h13.1v2.85h-13.1zM425.2 392.75h15.3v2.85h-15.3zM425.2 396.00h14.8v2.85h-14.8zM425.2 399.25h16.8v2.85h-16.8zM425.2 402.50h17.7v2.85h-17.7zM425.2 405.75h21.6v2.85h-21.6zM425.2 409.00h21.2v2.85h-21.2zM425.2 412.25h20.0v2.85h-20.0zM425.2 415.50h20.3v2.85h-20.3zM425.2 418.75h21.2v2.85h-21.2zM425.2 422.00h20.3v2.85h-20.3zM425.2 425.25h17.9v2.85h-17.9zM425.2 428.50h17.1v2.85h-17.1zM425.2 431.75h23.4v2.85h-23.4zM425.2 435.00h25.3v2.85h-25.3zM425.2 438.25h12.8v2.85h-12.8zM425.2 441.50h10.2v2.85h-10.2zM425.2 444.75h9.1v2.85h-9.1zM425.2 448.00h8.9v2.85h-8.9zM425.2 451.25h7.4v2.85h-7.4zM425.2 454.50h5.9v2.85h-5.9zM425.2 457.75h5.6v2.85h-5.6zM425.2 461.00h7.0v2.85h-7.0zM425.2 464.25h9.6v2.85h-9.6zM425.2 467.50h11.2v2.85h-11.2zM425.2 470.75h18.0v2.85h-18.0zM425.2 474.00h11.7v2.85h-11.7zM425.2 477.25h28.6v2.85h-28.6zM425.2 480.50h18.9v2.85h-18.9zM425.2 483.75h11.7v2.85h-11.7zM425.2 487.00h11.4v2.85h-11.4zM425.2 490.25h11.6v2.85h-11.6zM425.2 493.50h10.0v2.85h-10.0zM425.2 496.75h9.4v2.85h-9.4zM425.2 500.00h3.5v2.85h-3.5z" fill="#5a8fe9"/><rect x="437.7" y="266.0" width="2.2" height="110.0" fill="#333"/><rect x="437.7" y="438.0" width="2.2" height="65.0" fill="#333"/><rect x="424.85" y="377.20" width="27.60" height="59.60" fill="none" stroke="#333" stroke-width="2.35"/><rect x="419.7" y="376.0" width="4" height="62.0" fill="#e8504a"/><rect x="460.1" y="509.0" width="30.0" height="68.5" fill="#fff"/><path d="M461.6 470.00h1.0v2.85h-1.0zM461.6 473.25h1.0v2.85h-1.0zM461.6 476.50h1.0v2.85h-1.0zM461.6 479.75h1.0v2.85h-1.0zM461.6 483.00h1.0v2.85h-1.0zM461.6 486.25h1.0v2.85h-1.0zM461.6 489.50h1.0v2.85h-1.0zM461.6 492.75h1.0v2.85h-1.0zM461.6 496.00h1.0v2.85h-1.0zM461.6 499.25h1.0v2.85h-1.0zM461.6 502.50h12.3v2.85h-12.3zM461.6 505.75h2.8v2.85h-2.8zM461.6 509.00h1.0v2.85h-1.0zM461.6 512.25h1.0v2.85h-1.0zM461.6 515.50h1.0v2.85h-1.0zM461.6 518.75h1.0v2.85h-1.0zM461.6 522.00h1.0v2.85h-1.0zM461.6 525.25h1.0v2.85h-1.0zM461.6 528.50h1.0v2.85h-1.0zM461.6 531.75h1.1v2.85h-1.1zM461.6 535.00h1.0v2.85h-1.0zM461.6 538.25h1.1v2.85h-1.1zM461.6 541.50h1.0v2.85h-1.0zM461.6 544.75h1.0v2.85h-1.0zM461.6 548.00h1.1v2.85h-1.1zM461.6 551.25h1.0v2.85h-1.0zM461.6 554.50h1.0v2.85h-1.0zM461.6 557.75h1.0v2.85h-1.0zM461.6 561.00h1.1v2.85h-1.1zM461.6 564.25h1.0v2.85h-1.0zM461.6 567.50h1.1v2.85h-1.1zM461.6 570.75h1.0v2.85h-1.0zM461.6 574.00h3.4v2.85h-3.4zM461.6 577.25h11.8v2.85h-11.8zM461.6 580.50h11.7v2.85h-11.7zM461.6 583.75h11.1v2.85h-11.1zM461.6 587.00h11.3v2.85h-11.3zM461.6 590.25h11.2v2.85h-11.2zM461.6 593.50h12.5v2.85h-12.5zM461.6 596.75h12.6v2.85h-12.6zM461.6 600.00h22.7v2.85h-22.7zM461.6 603.25h21.5v2.85h-21.5zM461.6 606.50h23.4v2.85h-23.4zM461.6 609.75h29.7v2.85h-29.7zM461.6 613.00h24.7v2.85h-24.7zM461.6 616.25h20.0v2.85h-20.0zM461.6 619.50h17.8v2.85h-17.8zM461.6 622.75h12.8v2.85h-12.8zM461.6 626.00h9.9v2.85h-9.9zM461.6 629.25h7.1v2.85h-7.1zM461.6 632.50h6.1v2.85h-6.1zM461.6 635.75h4.8v2.85h-4.8zM461.6 639.00h4.3v2.85h-4.3zM461.6 642.25h2.2v2.85h-2.2zM461.6 645.50h1.0v2.85h-1.0z" fill="#5a8fe9"/><rect x="474.1" y="470.5" width="2.2" height="38.5" fill="#333"/><rect x="474.1" y="577.5" width="2.2" height="68.5" fill="#333"/><rect x="461.30" y="510.20" width="27.60" height="66.10" fill="none" stroke="#333" stroke-width="2.35"/><rect x="456.1" y="509.0" width="4" height="68.5" fill="#e8504a"/><rect x="496.6" y="789.0" width="30.0" height="105.0" fill="#fff"/><path d="M498.1 695.00h1.1v2.85h-1.1zM498.1 698.25h1.6v2.85h-1.6zM498.1 701.50h1.8v2.85h-1.8zM498.1 704.75h2.1v2.85h-2.1zM498.1 708.00h2.3v2.85h-2.3zM498.1 711.25h2.7v2.85h-2.7zM498.1 714.50h3.7v2.85h-3.7zM498.1 717.75h5.2v2.85h-5.2zM498.1 721.00h5.5v2.85h-5.5zM498.1 724.25h6.4v2.85h-6.4zM498.1 727.50h6.4v2.85h-6.4zM498.1 730.75h7.3v2.85h-7.3zM498.1 734.00h7.5v2.85h-7.5zM498.1 737.25h7.6v2.85h-7.6zM498.1 740.50h6.9v2.85h-6.9zM498.1 743.75h6.6v2.85h-6.6zM498.1 747.00h6.7v2.85h-6.7zM498.1 750.25h6.4v2.85h-6.4zM498.1 753.50h6.5v2.85h-6.5zM498.1 756.75h6.2v2.85h-6.2zM498.1 760.00h6.2v2.85h-6.2zM498.1 763.25h5.5v2.85h-5.5zM498.1 766.50h5.1v2.85h-5.1zM498.1 769.75h4.8v2.85h-4.8zM498.1 773.00h4.0v2.85h-4.0zM498.1 776.25h4.9v2.85h-4.9zM498.1 779.50h20.5v2.85h-20.5zM498.1 782.75h7.8v2.85h-7.8zM498.1 786.00h10.8v2.85h-10.8zM498.1 789.25h13.2v2.85h-13.2zM498.1 792.50h14.9v2.85h-14.9zM498.1 795.75h20.0v2.85h-20.0zM498.1 799.00h17.0v2.85h-17.0zM498.1 802.25h14.3v2.85h-14.3zM498.1 805.50h12.4v2.85h-12.4zM498.1 808.75h10.8v2.85h-10.8zM498.1 812.00h8.2v2.85h-8.2zM498.1 815.25h7.2v2.85h-7.2zM498.1 818.50h5.6v2.85h-5.6zM498.1 821.75h4.4v2.85h-4.4zM498.1 825.00h2.8v2.85h-2.8zM498.1 828.25h2.1v2.85h-2.1zM498.1 831.50h2.0v2.85h-2.0zM498.1 834.75h2.1v2.85h-2.1zM498.1 838.00h2.1v2.85h-2.1zM498.1 841.25h2.1v2.85h-2.1zM498.1 844.50h1.9v2.85h-1.9zM498.1 847.75h1.8v2.85h-1.8zM498.1 851.00h1.9v2.85h-1.9zM498.1 854.25h2.0v2.85h-2.0zM498.1 857.50h1.9v2.85h-1.9zM498.1 860.75h2.1v2.85h-2.1zM498.1 864.00h2.0v2.85h-2.0zM498.1 867.25h2.6v2.85h-2.6zM498.1 870.50h4.8v2.85h-4.8zM498.1 873.75h6.2v2.85h-6.2zM498.1 877.00h4.6v2.85h-4.6zM498.1 880.25h3.3v2.85h-3.3zM498.1 883.50h12.6v2.85h-12.6zM498.1 886.75h28.1v2.85h-28.1zM498.1 890.00h27.0v2.85h-27.0zM498.1 893.25h1.0v2.85h-1.0zM498.1 896.50h1.0v2.85h-1.0zM498.1 899.75h1.0v2.85h-1.0zM498.1 903.00h1.0v2.85h-1.0zM498.1 906.25h1.0v2.85h-1.0zM498.1 909.50h1.0v2.85h-1.0zM498.1 912.75h1.0v2.85h-1.0zM498.1 916.00h1.0v2.85h-1.0zM498.1 919.25h1.0v2.85h-1.0zM498.1 922.50h1.0v2.85h-1.0zM498.1 925.75h1.1v2.85h-1.1zM498.1 929.00h1.0v2.85h-1.0zM498.1 932.25h1.0v2.85h-1.0zM498.1 935.50h1.0v2.85h-1.0zM498.1 938.75h1.0v2.85h-1.0zM498.1 942.00h1.0v2.85h-1.0zM498.1 945.25h1.0v2.85h-1.0zM498.1 948.50h1.0v2.85h-1.0zM498.1 951.75h1.0v2.85h-1.0z" fill="#5a8fe9"/><rect x="510.6" y="695.0" width="2.2" height="94.0" fill="#333"/><rect x="510.6" y="894.0" width="2.2" height="58.0" fill="#333"/><rect x="497.75" y="790.20" width="27.60" height="102.60" fill="none" stroke="#333" stroke-width="2.35"/><rect x="492.6" y="789.0" width="4" height="105.0" fill="#1f9e87"/><rect x="533.0" y="713.7" width="30.0" height="10.0" fill="#fff"/><path d="M534.5 620.00h2.4v2.85h-2.4zM534.5 623.25h3.5v2.85h-3.5zM534.5 626.50h4.9v2.85h-4.9zM534.5 629.75h5.6v2.85h-5.6zM534.5 633.00h6.9v2.85h-6.9zM534.5 636.25h7.3v2.85h-7.3zM534.5 639.50h8.4v2.85h-8.4zM534.5 642.75h9.8v2.85h-9.8zM534.5 646.00h11.5v2.85h-11.5zM534.5 649.25h12.7v2.85h-12.7zM534.5 652.50h14.4v2.85h-14.4zM534.5 655.75h11.6v2.85h-11.6zM534.5 659.00h9.2v2.85h-9.2zM534.5 662.25h7.4v2.85h-7.4zM534.5 665.50h6.4v2.85h-6.4zM534.5 668.75h5.2v2.85h-5.2zM534.5 672.00h6.1v2.85h-6.1zM534.5 675.25h6.8v2.85h-6.8zM534.5 678.50h9.3v2.85h-9.3zM534.5 681.75h10.8v2.85h-10.8zM534.5 685.00h10.6v2.85h-10.6zM534.5 688.25h12.9v2.85h-12.9zM534.5 691.50h13.3v2.85h-13.3zM534.5 694.75h13.3v2.85h-13.3zM534.5 698.00h11.9v2.85h-11.9zM534.5 701.25h9.9v2.85h-9.9zM534.5 704.50h8.0v2.85h-8.0zM534.5 707.75h7.0v2.85h-7.0zM534.5 711.00h5.8v2.85h-5.8zM534.5 714.25h12.2v2.85h-12.2zM534.5 717.50h9.3v2.85h-9.3zM534.5 720.75h8.0v2.85h-8.0zM534.5 724.00h2.1v2.85h-2.1zM534.5 727.25h1.6v2.85h-1.6zM534.5 730.50h1.6v2.85h-1.6zM534.5 733.75h1.3v2.85h-1.3zM534.5 737.00h1.2v2.85h-1.2z" fill="#5a8fe9"/><rect x="547.0" y="620.0" width="2.2" height="93.7" fill="#333"/><rect x="547.0" y="723.7" width="2.2" height="16.3" fill="#333"/><rect x="534.20" y="714.90" width="27.60" height="7.60" fill="none" stroke="#333" stroke-width="2.35"/><rect x="529.0" y="713.7" width="4" height="10.0" fill="#e8504a"/><rect x="569.5" y="570.5" width="30.0" height="173.2" fill="#fff"/><path d="M571.0 549.00h4.4v2.85h-4.4zM571.0 552.25h4.7v2.85h-4.7zM571.0 555.50h5.8v2.85h-5.8zM571.0 558.75h7.3v2.85h-7.3zM571.0 562.00h18.5v2.85h-18.5zM571.0 565.25h11.4v2.85h-11.4zM571.0 568.50h14.5v2.85h-14.5zM571.0 571.75h16.0v2.85h-16.0zM571.0 575.00h15.8v2.85h-15.8zM571.0 578.25h15.7v2.85h-15.7zM571.0 581.50h16.4v2.85h-16.4zM571.0 584.75h16.5v2.85h-16.5zM571.0 588.00h13.7v2.85h-13.7zM571.0 591.25h10.1v2.85h-10.1zM571.0 594.50h11.1v2.85h-11.1zM571.0 597.75h10.9v2.85h-10.9zM571.0 601.00h9.4v2.85h-9.4zM571.0 604.25h4.5v2.85h-4.5zM571.0 607.50h4.1v2.85h-4.1zM571.0 610.75h4.3v2.85h-4.3zM571.0 614.00h3.9v2.85h-3.9zM571.0 617.25h3.9v2.85h-3.9zM571.0 620.50h3.9v2.85h-3.9zM571.0 623.75h4.5v2.85h-4.5zM571.0 627.00h5.7v2.85h-5.7zM571.0 630.25h7.0v2.85h-7.0zM571.0 633.50h8.9v2.85h-8.9zM571.0 636.75h5.8v2.85h-5.8zM571.0 640.00h3.7v2.85h-3.7zM571.0 643.25h3.9v2.85h-3.9zM571.0 646.50h4.4v2.85h-4.4zM571.0 649.75h4.1v2.85h-4.1zM571.0 653.00h4.7v2.85h-4.7zM571.0 656.25h4.3v2.85h-4.3zM571.0 659.50h4.4v2.85h-4.4zM571.0 662.75h4.6v2.85h-4.6zM571.0 666.00h4.5v2.85h-4.5zM571.0 669.25h4.7v2.85h-4.7zM571.0 672.50h5.2v2.85h-5.2zM571.0 675.75h5.2v2.85h-5.2zM571.0 679.00h5.4v2.85h-5.4zM571.0 682.25h6.1v2.85h-6.1zM571.0 685.50h7.2v2.85h-7.2zM571.0 688.75h8.1v2.85h-8.1zM571.0 692.00h8.5v2.85h-8.5zM571.0 695.25h9.5v2.85h-9.5zM571.0 698.50h9.4v2.85h-9.4zM571.0 701.75h13.3v2.85h-13.3zM571.0 705.00h16.0v2.85h-16.0zM571.0 708.25h23.0v2.85h-23.0zM571.0 711.50h26.6v2.85h-26.6zM571.0 714.75h22.3v2.85h-22.3zM571.0 718.00h20.4v2.85h-20.4zM571.0 721.25h13.9v2.85h-13.9zM571.0 724.50h9.8v2.85h-9.8zM571.0 727.75h8.4v2.85h-8.4zM571.0 731.00h7.2v2.85h-7.2zM571.0 734.25h6.4v2.85h-6.4zM571.0 737.50h6.1v2.85h-6.1zM571.0 740.75h5.5v2.85h-5.5zM571.0 744.00h7.3v2.85h-7.3zM571.0 747.25h10.2v2.85h-10.2zM571.0 750.50h6.2v2.85h-6.2zM571.0 753.75h3.6v2.85h-3.6z" fill="#5a8fe9"/><rect x="583.5" y="548.7" width="2.2" height="21.8" fill="#333"/><rect x="583.5" y="743.7" width="2.2" height="12.3" fill="#333"/><rect x="570.65" y="571.70" width="27.60" height="170.80" fill="none" stroke="#333" stroke-width="2.35"/><rect x="565.5" y="570.5" width="4" height="173.2" fill="#e8504a"/><rect x="605.9" y="661.0" width="30.0" height="14.0" fill="#fff"/><path d="M607.4 617.00h1.6v2.85h-1.6zM607.4 620.25h2.7v2.85h-2.7zM607.4 623.50h3.9v2.85h-3.9zM607.4 626.75h5.7v2.85h-5.7zM607.4 630.00h8.5v2.85h-8.5zM607.4 633.25h8.2v2.85h-8.2zM607.4 636.50h8.2v2.85h-8.2zM607.4 639.75h9.4v2.85h-9.4zM607.4 643.00h9.8v2.85h-9.8zM607.4 646.25h9.3v2.85h-9.3zM607.4 649.50h9.1v2.85h-9.1zM607.4 652.75h9.5v2.85h-9.5zM607.4 656.00h9.3v2.85h-9.3zM607.4 659.25h11.2v2.85h-11.2zM607.4 662.50h16.0v2.85h-16.0zM607.4 665.75h19.2v2.85h-19.2zM607.4 669.00h23.1v2.85h-23.1zM607.4 672.25h12.6v2.85h-12.6zM607.4 675.50h19.1v2.85h-19.1zM607.4 678.75h14.5v2.85h-14.5zM607.4 682.00h11.8v2.85h-11.8zM607.4 685.25h10.4v2.85h-10.4zM607.4 688.50h9.5v2.85h-9.5zM607.4 691.75h8.3v2.85h-8.3zM607.4 695.00h7.8v2.85h-7.8zM607.4 698.25h5.6v2.85h-5.6zM607.4 701.50h4.6v2.85h-4.6zM607.4 704.75h4.3v2.85h-4.3zM607.4 708.00h2.6v2.85h-2.6zM607.4 711.25h1.9v2.85h-1.9zM607.4 714.50h1.0v2.85h-1.0z" fill="#5a8fe9"/><rect x="619.9" y="617.0" width="2.2" height="44.0" fill="#333"/><rect x="619.9" y="675.0" width="2.2" height="41.0" fill="#333"/><rect x="607.10" y="662.20" width="27.60" height="11.60" fill="none" stroke="#333" stroke-width="2.35"/><rect x="601.9" y="661.0" width="4" height="14.0" fill="#1f9e87"/><rect x="642.4" y="612.5" width="30.0" height="36.5" fill="#fff"/><path d="M643.9 581.00h2.7v2.85h-2.7zM643.9 584.25h3.5v2.85h-3.5zM643.9 587.50h4.8v2.85h-4.8zM643.9 590.75h5.8v2.85h-5.8zM643.9 594.00h7.9v2.85h-7.9zM643.9 597.25h10.5v2.85h-10.5zM643.9 600.50h16.1v2.85h-16.1zM643.9 603.75h15.8v2.85h-15.8zM643.9 607.00h28.6v2.85h-28.6zM643.9 610.25h13.4v2.85h-13.4zM643.9 613.50h11.5v2.85h-11.5zM643.9 616.75h10.4v2.85h-10.4zM643.9 620.00h9.1v2.85h-9.1zM643.9 623.25h11.3v2.85h-11.3zM643.9 626.50h14.3v2.85h-14.3zM643.9 629.75h14.7v2.85h-14.7zM643.9 633.00h17.7v2.85h-17.7zM643.9 636.25h21.4v2.85h-21.4zM643.9 639.50h20.2v2.85h-20.2zM643.9 642.75h19.5v2.85h-19.5zM643.9 646.00h19.4v2.85h-19.4zM643.9 649.25h16.5v2.85h-16.5zM643.9 652.50h12.9v2.85h-12.9zM643.9 655.75h8.4v2.85h-8.4zM643.9 659.00h6.9v2.85h-6.9zM643.9 662.25h5.6v2.85h-5.6zM643.9 665.50h4.7v2.85h-4.7zM643.9 668.75h3.5v2.85h-3.5zM643.9 672.00h2.4v2.85h-2.4zM643.9 675.25h1.4v2.85h-1.4z" fill="#5a8fe9"/><rect x="656.4" y="581.0" width="2.2" height="31.5" fill="#333"/><rect x="656.4" y="649.0" width="2.2" height="28.5" fill="#333"/><rect x="643.55" y="613.70" width="27.60" height="34.10" fill="none" stroke="#333" stroke-width="2.35"/><rect x="638.4" y="612.5" width="4" height="36.5" fill="#1f9e87"/><rect x="678.8" y="597.0" width="30.0" height="7.5" fill="#fff"/><path d="M680.3 571.00h2.7v2.85h-2.7zM680.3 574.25h4.1v2.85h-4.1zM680.3 577.50h5.0v2.85h-5.0zM680.3 580.75h7.1v2.85h-7.1zM680.3 584.00h7.8v2.85h-7.8zM680.3 587.25h10.7v2.85h-10.7zM680.3 590.50h11.0v2.85h-11.0zM680.3 593.75h11.6v2.85h-11.6zM680.3 597.00h15.2v2.85h-15.2zM680.3 600.25h19.2v2.85h-19.2zM680.3 603.50h14.3v2.85h-14.3zM680.3 606.75h14.4v2.85h-14.4zM680.3 610.00h13.1v2.85h-13.1zM680.3 613.25h16.6v2.85h-16.6zM680.3 616.50h27.1v2.85h-27.1zM680.3 619.75h15.2v2.85h-15.2zM680.3 623.00h13.1v2.85h-13.1zM680.3 626.25h11.3v2.85h-11.3zM680.3 629.50h10.6v2.85h-10.6zM680.3 632.75h8.1v2.85h-8.1zM680.3 636.00h7.0v2.85h-7.0zM680.3 639.25h6.0v2.85h-6.0zM680.3 642.50h2.8v2.85h-2.8zM680.3 645.75h1.0v2.85h-1.0z" fill="#5a8fe9"/><rect x="692.8" y="571.0" width="2.2" height="26.0" fill="#333"/><rect x="692.8" y="604.5" width="2.2" height="41.5" fill="#333"/><rect x="680.00" y="598.20" width="27.60" height="5.10" fill="none" stroke="#333" stroke-width="2.35"/><rect x="674.8" y="597.0" width="4" height="7.5" fill="#e8504a"/><rect x="715.3" y="486.0" width="30.0" height="75.0" fill="#fff"/><path d="M716.8 470.00h6.4v2.85h-6.4zM716.8 473.25h12.2v2.85h-12.2zM716.8 476.50h12.5v2.85h-12.5zM716.8 479.75h13.3v2.85h-13.3zM716.8 483.00h16.1v2.85h-16.1zM716.8 486.25h25.8v2.85h-25.8zM716.8 489.50h22.2v2.85h-22.2zM716.8 492.75h18.5v2.85h-18.5zM716.8 496.00h17.8v2.85h-17.8zM716.8 499.25h20.9v2.85h-20.9zM716.8 502.50h25.7v2.85h-25.7zM716.8 505.75h17.9v2.85h-17.9zM716.8 509.00h15.4v2.85h-15.4zM716.8 512.25h11.7v2.85h-11.7zM716.8 515.50h8.8v2.85h-8.8zM716.8 518.75h7.3v2.85h-7.3zM716.8 522.00h6.4v2.85h-6.4zM716.8 525.25h6.7v2.85h-6.7zM716.8 528.50h8.3v2.85h-8.3zM716.8 531.75h8.9v2.85h-8.9zM716.8 535.00h10.8v2.85h-10.8zM716.8 538.25h11.4v2.85h-11.4zM716.8 541.50h11.6v2.85h-11.6zM716.8 544.75h11.4v2.85h-11.4zM716.8 548.00h10.1v2.85h-10.1zM716.8 551.25h7.8v2.85h-7.8zM716.8 554.50h9.5v2.85h-9.5zM716.8 557.75h4.1v2.85h-4.1z" fill="#5a8fe9"/><rect x="729.3" y="470.5" width="2.2" height="15.5" fill="#333"/><rect x="716.45" y="487.20" width="27.60" height="72.60" fill="none" stroke="#333" stroke-width="2.35"/><rect x="711.3" y="486.0" width="4" height="75.0" fill="#1f9e87"/><rect x="751.7" y="440.8" width="30.0" height="36.2" fill="#fff"/><path d="M753.2 425.00h4.4v2.85h-4.4zM753.2 428.25h8.2v2.85h-8.2zM753.2 431.50h9.9v2.85h-9.9zM753.2 434.75h11.9v2.85h-11.9zM753.2 438.00h12.0v2.85h-12.0zM753.2 441.25h14.2v2.85h-14.2zM753.2 444.50h16.7v2.85h-16.7zM753.2 447.75h21.7v2.85h-21.7zM753.2 451.00h23.4v2.85h-23.4zM753.2 454.25h25.5v2.85h-25.5zM753.2 457.50h23.6v2.85h-23.6zM753.2 460.75h22.2v2.85h-22.2zM753.2 464.00h19.1v2.85h-19.1zM753.2 467.25h29.0v2.85h-29.0zM753.2 470.50h17.4v2.85h-17.4zM753.2 473.75h10.1v2.85h-10.1zM753.2 477.00h7.4v2.85h-7.4zM753.2 480.25h6.9v2.85h-6.9zM753.2 483.50h6.2v2.85h-6.2zM753.2 486.75h4.9v2.85h-4.9zM753.2 490.00h4.1v2.85h-4.1zM753.2 493.25h3.6v2.85h-3.6zM753.2 496.50h3.1v2.85h-3.1zM753.2 499.75h2.4v2.85h-2.4zM753.2 503.00h1.9v2.85h-1.9zM753.2 506.25h1.7v2.85h-1.7zM753.2 509.50h1.2v2.85h-1.2z" fill="#5a8fe9"/><rect x="765.7" y="425.0" width="2.2" height="15.8" fill="#333"/><rect x="765.7" y="477.0" width="2.2" height="35.5" fill="#333"/><rect x="752.90" y="441.95" width="27.60" height="33.85" fill="none" stroke="#333" stroke-width="2.35"/><rect x="747.7" y="440.8" width="4" height="36.2" fill="#1f9e87"/><rect x="788.2" y="369.0" width="30.0" height="27.0" fill="#fff"/><path d="M789.7 369.00h7.4v2.85h-7.4zM789.7 372.25h7.1v2.85h-7.1zM789.7 375.50h6.1v2.85h-6.1zM789.7 378.75h7.4v2.85h-7.4zM789.7 382.00h9.7v2.85h-9.7zM789.7 385.25h23.7v2.85h-23.7zM789.7 388.50h21.6v2.85h-21.6zM789.7 391.75h21.2v2.85h-21.2zM789.7 395.00h16.2v2.85h-16.2zM789.7 398.25h17.2v2.85h-17.2zM789.7 401.50h15.0v2.85h-15.0zM789.7 404.75h17.2v2.85h-17.2zM789.7 408.00h14.0v2.85h-14.0zM789.7 411.25h13.7v2.85h-13.7zM789.7 414.50h11.5v2.85h-11.5zM789.7 417.75h8.9v2.85h-8.9zM789.7 421.00h5.7v2.85h-5.7zM789.7 424.25h2.8v2.85h-2.8z" fill="#5a8fe9"/><rect x="802.2" y="396.0" width="2.2" height="31.5" fill="#333"/><rect x="789.35" y="370.20" width="27.60" height="24.60" fill="none" stroke="#333" stroke-width="2.35"/><rect x="784.2" y="369.0" width="4" height="27.0" fill="#1f9e87"/><rect x="824.6" y="378.8" width="30.0" height="36.8" fill="#fff"/><path d="M826.1 367.00h26.9v2.85h-26.9zM826.1 370.25h26.5v2.85h-26.5zM826.1 373.50h1.2v2.85h-1.2zM826.1 376.75h1.2v2.85h-1.2zM826.1 380.00h1.4v2.85h-1.4zM826.1 383.25h1.7v2.85h-1.7zM826.1 386.50h1.6v2.85h-1.6zM826.1 389.75h1.9v2.85h-1.9zM826.1 393.00h3.1v2.85h-3.1zM826.1 396.25h5.2v2.85h-5.2zM826.1 399.50h7.5v2.85h-7.5zM826.1 402.75h10.5v2.85h-10.5zM826.1 406.00h13.6v2.85h-13.6zM826.1 409.25h19.1v2.85h-19.1zM826.1 412.50h19.2v2.85h-19.2zM826.1 415.75h12.5v2.85h-12.5zM826.1 419.00h8.5v2.85h-8.5zM826.1 422.25h7.8v2.85h-7.8zM826.1 425.50h7.7v2.85h-7.7zM826.1 428.75h5.0v2.85h-5.0zM826.1 432.00h1.4v2.85h-1.4z" fill="#5a8fe9"/><rect x="838.6" y="367.0" width="2.2" height="11.8" fill="#333"/><rect x="838.6" y="415.5" width="2.2" height="18.5" fill="#333"/><rect x="825.80" y="379.95" width="27.60" height="34.35" fill="none" stroke="#333" stroke-width="2.35"/><rect x="820.6" y="378.8" width="4" height="36.8" fill="#e8504a"/><rect x="861.1" y="362.5" width="30.0" height="46.2" fill="#fff"/><path d="M862.6 361.00h9.6v2.85h-9.6zM862.6 364.25h15.5v2.85h-15.5zM862.6 367.50h9.9v2.85h-9.9zM862.6 370.75h6.4v2.85h-6.4zM862.6 374.00h7.3v2.85h-7.3zM862.6 377.25h9.8v2.85h-9.8zM862.6 380.50h11.8v2.85h-11.8zM862.6 383.75h13.0v2.85h-13.0zM862.6 387.00h15.9v2.85h-15.9zM862.6 390.25h16.6v2.85h-16.6zM862.6 393.50h11.5v2.85h-11.5zM862.6 396.75h12.0v2.85h-12.0zM862.6 400.00h12.9v2.85h-12.9zM862.6 403.25h26.8v2.85h-26.8zM862.6 406.50h13.7v2.85h-13.7zM862.6 409.75h11.8v2.85h-11.8zM862.6 413.00h13.9v2.85h-13.9zM862.6 416.25h17.0v2.85h-17.0zM862.6 419.50h23.5v2.85h-23.5zM862.6 422.75h15.2v2.85h-15.2zM862.6 426.00h12.6v2.85h-12.6zM862.6 429.25h5.7v2.85h-5.7zM862.6 432.50h3.8v2.85h-3.8zM862.6 435.75h3.1v2.85h-3.1zM862.6 439.00h2.3v2.85h-2.3zM862.6 442.25h1.6v2.85h-1.6zM862.6 445.50h1.0v2.85h-1.0z" fill="#5a8fe9"/><rect x="875.1" y="360.5" width="2.2" height="2.0" fill="#333"/><rect x="875.1" y="408.8" width="2.2" height="38.8" fill="#333"/><rect x="862.25" y="363.70" width="27.60" height="43.85" fill="none" stroke="#333" stroke-width="2.35"/><rect x="857.1" y="362.5" width="4" height="46.2" fill="#1f9e87"/><rect x="897.5" y="307.5" width="30.0" height="55.8" fill="#fff"/><path d="M899.0 292.00h1.6v2.85h-1.6zM899.0 295.25h3.0v2.85h-3.0zM899.0 298.50h4.4v2.85h-4.4zM899.0 301.75h25.7v2.85h-25.7zM899.0 305.00h14.4v2.85h-14.4zM899.0 308.25h11.9v2.85h-11.9zM899.0 311.50h12.0v2.85h-12.0zM899.0 314.75h12.4v2.85h-12.4zM899.0 318.00h14.1v2.85h-14.1zM899.0 321.25h10.8v2.85h-10.8zM899.0 324.50h10.9v2.85h-10.9zM899.0 327.75h14.2v2.85h-14.2zM899.0 331.00h16.2v2.85h-16.2zM899.0 334.25h12.1v2.85h-12.1zM899.0 337.50h14.2v2.85h-14.2zM899.0 340.75h18.8v2.85h-18.8zM899.0 344.00h24.0v2.85h-24.0zM899.0 347.25h15.2v2.85h-15.2zM899.0 350.50h11.2v2.85h-11.2zM899.0 353.75h9.8v2.85h-9.8zM899.0 357.00h6.8v2.85h-6.8zM899.0 360.25h4.1v2.85h-4.1z" fill="#5a8fe9"/><rect x="911.5" y="292.5" width="2.2" height="15.0" fill="#333"/><rect x="898.70" y="308.70" width="27.60" height="53.35" fill="none" stroke="#333" stroke-width="2.35"/><rect x="893.5" y="307.5" width="4" height="55.8" fill="#1f9e87"/><rect x="934.0" y="320.8" width="30.0" height="3.5" fill="#fff"/><path d="M935.5 285.00h1.1v2.85h-1.1zM935.5 288.25h1.2v2.85h-1.2zM935.5 291.50h1.4v2.85h-1.4zM935.5 294.75h1.5v2.85h-1.5zM935.5 298.00h1.4v2.85h-1.4zM935.5 301.25h1.8v2.85h-1.8zM935.5 304.50h1.7v2.85h-1.7zM935.5 307.75h1.9v2.85h-1.9zM935.5 311.00h2.4v2.85h-2.4zM935.5 314.25h5.2v2.85h-5.2zM935.5 317.50h7.6v2.85h-7.6zM935.5 320.75h26.9v2.85h-26.9zM935.5 324.00h23.4v2.85h-23.4zM935.5 327.25h20.8v2.85h-20.8zM935.5 330.50h12.7v2.85h-12.7zM935.5 333.75h10.8v2.85h-10.8zM935.5 337.00h9.1v2.85h-9.1zM935.5 340.25h7.9v2.85h-7.9zM935.5 343.50h5.8v2.85h-5.8zM935.5 346.75h3.0v2.85h-3.0zM935.5 350.00h2.4v2.85h-2.4zM935.5 353.25h2.2v2.85h-2.2zM935.5 356.50h1.7v2.85h-1.7zM935.5 359.75h1.3v2.85h-1.3z" fill="#5a8fe9"/><rect x="948.0" y="285.0" width="2.2" height="35.8" fill="#333"/><rect x="948.0" y="324.2" width="2.2" height="38.8" fill="#333"/><rect x="935.15" y="321.95" width="27.60" height="1.10" fill="none" stroke="#333" stroke-width="2.35"/><rect x="930.0" y="320.8" width="4" height="3.5" fill="#333"/><rect x="970.4" y="317.5" width="30.0" height="143.0" fill="#fff"/><path d="M971.9 279.00h2.2v2.85h-2.2zM971.9 282.25h2.9v2.85h-2.9zM971.9 285.50h3.7v2.85h-3.7zM971.9 288.75h4.4v2.85h-4.4zM971.9 292.00h5.1v2.85h-5.1zM971.9 295.25h5.0v2.85h-5.0zM971.9 298.50h5.8v2.85h-5.8zM971.9 301.75h5.1v2.85h-5.1zM971.9 305.00h4.6v2.85h-4.6zM971.9 308.25h4.6v2.85h-4.6zM971.9 311.50h3.7v2.85h-3.7zM971.9 314.75h3.3v2.85h-3.3zM971.9 318.00h3.1v2.85h-3.1zM971.9 321.25h3.7v2.85h-3.7zM971.9 324.50h3.7v2.85h-3.7zM971.9 327.75h3.8v2.85h-3.8zM971.9 331.00h4.9v2.85h-4.9zM971.9 334.25h6.0v2.85h-6.0zM971.9 337.50h6.0v2.85h-6.0zM971.9 340.75h7.4v2.85h-7.4zM971.9 344.00h8.2v2.85h-8.2zM971.9 347.25h6.9v2.85h-6.9zM971.9 350.50h6.4v2.85h-6.4zM971.9 353.75h5.6v2.85h-5.6zM971.9 357.00h5.0v2.85h-5.0zM971.9 360.25h5.0v2.85h-5.0zM971.9 363.50h5.6v2.85h-5.6zM971.9 366.75h6.0v2.85h-6.0zM971.9 370.00h5.9v2.85h-5.9zM971.9 373.25h6.0v2.85h-6.0zM971.9 376.50h6.6v2.85h-6.6zM971.9 379.75h7.2v2.85h-7.2zM971.9 383.00h6.2v2.85h-6.2zM971.9 386.25h6.0v2.85h-6.0zM971.9 389.50h5.6v2.85h-5.6zM971.9 392.75h5.8v2.85h-5.8zM971.9 396.00h5.3v2.85h-5.3zM971.9 399.25h4.8v2.85h-4.8zM971.9 402.50h5.3v2.85h-5.3zM971.9 405.75h6.0v2.85h-6.0zM971.9 409.00h6.6v2.85h-6.6zM971.9 412.25h7.2v2.85h-7.2zM971.9 415.50h7.1v2.85h-7.1zM971.9 418.75h7.6v2.85h-7.6zM971.9 422.00h9.1v2.85h-9.1zM971.9 425.25h9.4v2.85h-9.4zM971.9 428.50h9.9v2.85h-9.9zM971.9 431.75h10.6v2.85h-10.6zM971.9 435.00h12.9v2.85h-12.9zM971.9 438.25h12.5v2.85h-12.5zM971.9 441.50h14.7v2.85h-14.7zM971.9 444.75h15.8v2.85h-15.8zM971.9 448.00h17.8v2.85h-17.8zM971.9 451.25h19.9v2.85h-19.9zM971.9 454.50h21.6v2.85h-21.6zM971.9 457.75h14.9v2.85h-14.9zM971.9 461.00h13.7v2.85h-13.7zM971.9 464.25h20.7v2.85h-20.7zM971.9 467.50h27.6v2.85h-27.6zM971.9 470.75h19.1v2.85h-19.1zM971.9 474.00h16.0v2.85h-16.0z" fill="#5a8fe9"/><rect x="984.4" y="278.8" width="2.2" height="38.8" fill="#333"/><rect x="984.4" y="460.5" width="2.2" height="15.5" fill="#333"/><rect x="971.60" y="318.70" width="27.60" height="140.60" fill="none" stroke="#333" stroke-width="2.35"/><rect x="966.4" y="317.5" width="4" height="143.0" fill="#e8504a"/><rect x="1006.9" y="437.0" width="30.0" height="11.0" fill="#fff"/><path d="M1008.4 400.00h2.0v2.85h-2.0zM1008.4 403.25h4.2v2.85h-4.2zM1008.4 406.50h4.1v2.85h-4.1zM1008.4 409.75h4.7v2.85h-4.7zM1008.4 413.00h4.6v2.85h-4.6zM1008.4 416.25h4.6v2.85h-4.6zM1008.4 419.50h4.7v2.85h-4.7zM1008.4 422.75h5.3v2.85h-5.3zM1008.4 426.00h5.6v2.85h-5.6zM1008.4 429.25h6.1v2.85h-6.1zM1008.4 432.50h5.5v2.85h-5.5zM1008.4 435.75h13.5v2.85h-13.5zM1008.4 439.00h26.4v2.85h-26.4zM1008.4 442.25h14.4v2.85h-14.4zM1008.4 445.50h8.8v2.85h-8.8zM1008.4 448.75h8.1v2.85h-8.1zM1008.4 452.00h9.0v2.85h-9.0zM1008.4 455.25h9.4v2.85h-9.4zM1008.4 458.50h8.0v2.85h-8.0zM1008.4 461.75h8.2v2.85h-8.2zM1008.4 465.00h9.2v2.85h-9.2zM1008.4 468.25h11.2v2.85h-11.2zM1008.4 471.50h11.5v2.85h-11.5zM1008.4 474.75h12.7v2.85h-12.7zM1008.4 478.00h16.1v2.85h-16.1zM1008.4 481.25h14.6v2.85h-14.6zM1008.4 484.50h11.9v2.85h-11.9zM1008.4 487.75h9.6v2.85h-9.6zM1008.4 491.00h9.7v2.85h-9.7zM1008.4 494.25h7.9v2.85h-7.9zM1008.4 497.50h7.4v2.85h-7.4zM1008.4 500.75h6.0v2.85h-6.0zM1008.4 504.00h5.3v2.85h-5.3zM1008.4 507.25h3.7v2.85h-3.7zM1008.4 510.50h3.1v2.85h-3.1zM1008.4 513.75h1.9v2.85h-1.9zM1008.4 517.00h1.1v2.85h-1.1z" fill="#5a8fe9"/><rect x="1020.9" y="399.5" width="2.2" height="37.5" fill="#333"/><rect x="1020.9" y="448.0" width="2.2" height="71.0" fill="#333"/><rect x="1008.05" y="438.20" width="27.60" height="8.60" fill="none" stroke="#333" stroke-width="2.35"/><rect x="1002.9" y="437.0" width="4" height="11.0" fill="#e8504a"/><rect x="1043.3" y="447.5" width="30.0" height="45.8" fill="#fff"/><path d="M1044.8 431.00h1.1v2.85h-1.1zM1044.8 434.25h1.1v2.85h-1.1zM1044.8 437.50h1.0v2.85h-1.0zM1044.8 440.75h7.6v2.85h-7.6zM1044.8 444.00h1.2v2.85h-1.2zM1044.8 447.25h2.1v2.85h-2.1zM1044.8 450.50h3.0v2.85h-3.0zM1044.8 453.75h3.6v2.85h-3.6zM1044.8 457.00h4.3v2.85h-4.3zM1044.8 460.25h5.5v2.85h-5.5zM1044.8 463.50h6.4v2.85h-6.4zM1044.8 466.75h5.9v2.85h-5.9zM1044.8 470.00h6.8v2.85h-6.8zM1044.8 473.25h7.5v2.85h-7.5zM1044.8 476.50h7.0v2.85h-7.0zM1044.8 479.75h8.4v2.85h-8.4zM1044.8 483.00h10.0v2.85h-10.0zM1044.8 486.25h14.2v2.85h-14.2zM1044.8 489.50h14.1v2.85h-14.1zM1044.8 492.75h16.7v2.85h-16.7zM1044.8 496.00h26.2v2.85h-26.2zM1044.8 499.25h22.5v2.85h-22.5zM1044.8 502.50h18.2v2.85h-18.2zM1044.8 505.75h14.1v2.85h-14.1zM1044.8 509.00h12.3v2.85h-12.3zM1044.8 512.25h11.0v2.85h-11.0zM1044.8 515.50h10.2v2.85h-10.2zM1044.8 518.75h8.8v2.85h-8.8zM1044.8 522.00h9.0v2.85h-9.0zM1044.8 525.25h8.0v2.85h-8.0zM1044.8 528.50h7.0v2.85h-7.0zM1044.8 531.75h6.8v2.85h-6.8zM1044.8 535.00h6.0v2.85h-6.0zM1044.8 538.25h5.0v2.85h-5.0z" fill="#5a8fe9"/><rect x="1057.3" y="431.2" width="2.2" height="16.2" fill="#333"/><rect x="1057.3" y="493.2" width="2.2" height="46.8" fill="#333"/><rect x="1044.50" y="448.70" width="27.60" height="43.35" fill="none" stroke="#333" stroke-width="2.35"/><rect x="1039.3" y="447.5" width="4" height="45.8" fill="#e8504a"/><rect x="1079.8" y="490.0" width="30.0" height="15.8" fill="#fff"/><path d="M1081.3 480.00h4.4v2.85h-4.4zM1081.3 483.25h8.0v2.85h-8.0zM1081.3 486.50h16.2v2.85h-16.2zM1081.3 489.75h24.5v2.85h-24.5zM1081.3 493.00h25.0v2.85h-25.0zM1081.3 496.25h22.7v2.85h-22.7zM1081.3 499.50h11.9v2.85h-11.9zM1081.3 502.75h5.5v2.85h-5.5zM1081.3 506.00h9.3v2.85h-9.3zM1081.3 509.25h9.4v2.85h-9.4zM1081.3 512.50h7.7v2.85h-7.7zM1081.3 515.75h8.7v2.85h-8.7zM1081.3 519.00h9.3v2.85h-9.3zM1081.3 522.25h9.4v2.85h-9.4zM1081.3 525.50h9.2v2.85h-9.2zM1081.3 528.75h10.5v2.85h-10.5zM1081.3 532.00h10.8v2.85h-10.8zM1081.3 535.25h12.3v2.85h-12.3zM1081.3 538.50h11.3v2.85h-11.3z" fill="#5a8fe9"/><rect x="1093.8" y="480.0" width="2.2" height="10.0" fill="#333"/><rect x="1093.8" y="505.8" width="2.2" height="34.2" fill="#333"/><rect x="1080.95" y="491.20" width="27.60" height="13.35" fill="none" stroke="#333" stroke-width="2.35"/><rect x="1075.8" y="490.0" width="4" height="15.8" fill="#1f9e87"/><rect x="1116.2" y="470.0" width="30.0" height="90.0" fill="#fff"/><path d="M1117.7 471.00h11.6v2.85h-11.6zM1117.7 474.25h2.6v2.85h-2.6zM1117.7 477.50h2.1v2.85h-2.1zM1117.7 480.75h2.1v2.85h-2.1zM1117.7 484.00h1.9v2.85h-1.9zM1117.7 487.25h2.2v2.85h-2.2zM1117.7 490.50h2.0v2.85h-2.0zM1117.7 493.75h2.1v2.85h-2.1zM1117.7 497.00h2.1v2.85h-2.1zM1117.7 500.25h3.7v2.85h-3.7zM1117.7 503.50h8.4v2.85h-8.4zM1117.7 506.75h8.6v2.85h-8.6zM1117.7 510.00h7.6v2.85h-7.6zM1117.7 513.25h8.1v2.85h-8.1zM1117.7 516.50h8.7v2.85h-8.7zM1117.7 519.75h8.0v2.85h-8.0zM1117.7 523.00h9.1v2.85h-9.1zM1117.7 526.25h8.3v2.85h-8.3zM1117.7 529.50h9.2v2.85h-9.2zM1117.7 532.75h8.3v2.85h-8.3zM1117.7 536.00h8.9v2.85h-8.9zM1117.7 539.25h9.6v2.85h-9.6z" fill="#5a8fe9"/><rect x="1117.40" y="471.20" width="27.60" height="87.60" fill="none" stroke="#333" stroke-width="2.35"/><rect x="1112.2" y="470.0" width="4" height="90.0" fill="#e8504a"/><rect x="1152.7" y="470.0" width="30.0" height="33.0" fill="#fff"/><path d="M1154.2 354.00h1.9v2.85h-1.9zM1154.2 357.25h4.0v2.85h-4.0zM1154.2 360.50h6.2v2.85h-6.2zM1154.2 363.75h8.1v2.85h-8.1zM1154.2 367.00h9.4v2.85h-9.4zM1154.2 370.25h10.2v2.85h-10.2zM1154.2 373.50h10.8v2.85h-10.8zM1154.2 376.75h12.8v2.85h-12.8zM1154.2 380.00h12.3v2.85h-12.3zM1154.2 383.25h12.8v2.85h-12.8zM1154.2 386.50h25.6v2.85h-25.6zM1154.2 389.75h28.2v2.85h-28.2zM1154.2 393.00h25.3v2.85h-25.3zM1154.2 396.25h15.8v2.85h-15.8zM1154.2 399.50h15.7v2.85h-15.7zM1154.2 402.75h14.7v2.85h-14.7zM1154.2 406.00h10.1v2.85h-10.1zM1154.2 409.25h9.1v2.85h-9.1zM1154.2 412.50h9.1v2.85h-9.1zM1154.2 415.75h9.6v2.85h-9.6zM1154.2 419.00h8.4v2.85h-8.4zM1154.2 422.25h9.7v2.85h-9.7zM1154.2 425.50h9.2v2.85h-9.2zM1154.2 428.75h8.8v2.85h-8.8zM1154.2 432.00h8.7v2.85h-8.7zM1154.2 435.25h7.3v2.85h-7.3zM1154.2 438.50h7.5v2.85h-7.5zM1154.2 441.75h6.4v2.85h-6.4zM1154.2 445.00h5.9v2.85h-5.9zM1154.2 448.25h5.5v2.85h-5.5zM1154.2 451.50h4.7v2.85h-4.7zM1154.2 454.75h4.1v2.85h-4.1zM1154.2 458.00h4.0v2.85h-4.0zM1154.2 461.25h3.1v2.85h-3.1zM1154.2 464.50h3.2v2.85h-3.2zM1154.2 467.75h2.9v2.85h-2.9zM1154.2 471.00h22.5v2.85h-22.5zM1154.2 474.25h4.9v2.85h-4.9zM1154.2 477.50h6.2v2.85h-6.2zM1154.2 480.75h8.5v2.85h-8.5zM1154.2 484.00h10.0v2.85h-10.0zM1154.2 487.25h11.0v2.85h-11.0zM1154.2 490.50h12.6v2.85h-12.6zM1154.2 493.75h14.2v2.85h-14.2zM1154.2 497.00h11.6v2.85h-11.6zM1154.2 500.25h10.6v2.85h-10.6zM1154.2 503.50h12.0v2.85h-12.0zM1154.2 506.75h12.0v2.85h-12.0zM1154.2 510.00h10.0v2.85h-10.0zM1154.2 513.25h9.6v2.85h-9.6zM1154.2 516.50h9.6v2.85h-9.6zM1154.2 519.75h8.1v2.85h-8.1zM1154.2 523.00h7.4v2.85h-7.4zM1154.2 526.25h7.3v2.85h-7.3zM1154.2 529.50h6.3v2.85h-6.3zM1154.2 532.75h6.0v2.85h-6.0zM1154.2 536.00h5.2v2.85h-5.2zM1154.2 539.25h5.1v2.85h-5.1z" fill="#5a8fe9"/><rect x="1166.7" y="353.8" width="2.2" height="116.2" fill="#333"/><rect x="1166.7" y="503.0" width="2.2" height="37.0" fill="#333"/><rect x="1153.85" y="471.20" width="27.60" height="30.60" fill="none" stroke="#333" stroke-width="2.35"/><rect x="1148.7" y="470.0" width="4" height="33.0" fill="#e8504a"/><rect x="1189.1" y="433.8" width="30.0" height="30.0" fill="#fff"/><path d="M1190.6 428.00h1.7v2.85h-1.7zM1190.6 431.25h2.9v2.85h-2.9zM1190.6 434.50h24.5v2.85h-24.5zM1190.6 437.75h25.2v2.85h-25.2zM1190.6 441.00h24.5v2.85h-24.5zM1190.6 444.25h17.4v2.85h-17.4zM1190.6 447.50h15.0v2.85h-15.0zM1190.6 450.75h14.4v2.85h-14.4zM1190.6 454.00h17.8v2.85h-17.8zM1190.6 457.25h13.7v2.85h-13.7zM1190.6 460.50h11.5v2.85h-11.5zM1190.6 463.75h13.7v2.85h-13.7zM1190.6 467.00h26.6v2.85h-26.6zM1190.6 470.25h17.0v2.85h-17.0zM1190.6 473.50h11.1v2.85h-11.1zM1190.6 476.75h12.3v2.85h-12.3zM1190.6 480.00h12.1v2.85h-12.1zM1190.6 483.25h13.4v2.85h-13.4zM1190.6 486.50h20.5v2.85h-20.5zM1190.6 489.75h20.7v2.85h-20.7zM1190.6 493.00h23.5v2.85h-23.5zM1190.6 496.25h18.0v2.85h-18.0zM1190.6 499.50h11.5v2.85h-11.5zM1190.6 502.75h11.8v2.85h-11.8zM1190.6 506.00h9.7v2.85h-9.7zM1190.6 509.25h9.9v2.85h-9.9zM1190.6 512.50h9.0v2.85h-9.0zM1190.6 515.75h8.2v2.85h-8.2zM1190.6 519.00h7.3v2.85h-7.3zM1190.6 522.25h7.5v2.85h-7.5zM1190.6 525.50h6.1v2.85h-6.1zM1190.6 528.75h6.0v2.85h-6.0zM1190.6 532.00h5.6v2.85h-5.6zM1190.6 535.25h4.4v2.85h-4.4zM1190.6 538.50h3.8v2.85h-3.8z" fill="#5a8fe9"/><rect x="1203.1" y="428.0" width="2.2" height="5.8" fill="#333"/><rect x="1203.1" y="463.8" width="2.2" height="76.2" fill="#333"/><rect x="1190.30" y="434.95" width="27.60" height="27.60" fill="none" stroke="#333" stroke-width="2.35"/><rect x="1185.1" y="433.8" width="4" height="30.0" fill="#1f9e87"/><rect x="1225.6" y="421.2" width="30.0" height="138.8" fill="#fff"/><path d="M1227.1 389.00h1.1v2.85h-1.1zM1227.1 392.25h1.3v2.85h-1.3zM1227.1 395.50h1.6v2.85h-1.6zM1227.1 398.75h1.8v2.85h-1.8zM1227.1 402.00h1.8v2.85h-1.8zM1227.1 405.25h2.1v2.85h-2.1zM1227.1 408.50h2.3v2.85h-2.3zM1227.1 411.75h2.4v2.85h-2.4zM1227.1 415.00h3.0v2.85h-3.0zM1227.1 418.25h3.1v2.85h-3.1zM1227.1 421.50h25.9v2.85h-25.9zM1227.1 424.75h7.4v2.85h-7.4zM1227.1 428.00h8.6v2.85h-8.6zM1227.1 431.25h8.6v2.85h-8.6zM1227.1 434.50h8.4v2.85h-8.4zM1227.1 437.75h8.9v2.85h-8.9zM1227.1 441.00h8.6v2.85h-8.6zM1227.1 444.25h8.4v2.85h-8.4zM1227.1 447.50h8.4v2.85h-8.4zM1227.1 450.75h8.4v2.85h-8.4zM1227.1 454.00h7.8v2.85h-7.8zM1227.1 457.25h7.8v2.85h-7.8zM1227.1 460.50h8.0v2.85h-8.0zM1227.1 463.75h7.5v2.85h-7.5zM1227.1 467.00h7.4v2.85h-7.4zM1227.1 470.25h4.9v2.85h-4.9zM1227.1 473.50h2.9v2.85h-2.9zM1227.1 476.75h3.5v2.85h-3.5zM1227.1 480.00h4.0v2.85h-4.0zM1227.1 483.25h4.7v2.85h-4.7zM1227.1 486.50h5.1v2.85h-5.1zM1227.1 489.75h7.5v2.85h-7.5zM1227.1 493.00h10.8v2.85h-10.8zM1227.1 496.25h14.2v2.85h-14.2zM1227.1 499.50h14.3v2.85h-14.3zM1227.1 502.75h8.5v2.85h-8.5zM1227.1 506.00h6.2v2.85h-6.2zM1227.1 509.25h6.2v2.85h-6.2zM1227.1 512.50h6.0v2.85h-6.0zM1227.1 515.75h6.2v2.85h-6.2zM1227.1 519.00h6.1v2.85h-6.1zM1227.1 522.25h5.6v2.85h-5.6zM1227.1 525.50h5.0v2.85h-5.0zM1227.1 528.75h5.1v2.85h-5.1zM1227.1 532.00h4.4v2.85h-4.4zM1227.1 535.25h4.1v2.85h-4.1zM1227.1 538.50h4.3v2.85h-4.3z" fill="#5a8fe9"/><rect x="1239.6" y="388.8" width="2.2" height="32.5" fill="#333"/><rect x="1226.75" y="422.45" width="27.60" height="136.35" fill="none" stroke="#333" stroke-width="2.35"/><rect x="1221.6" y="421.2" width="4" height="138.8" fill="#e8504a"/><rect x="1298.5" y="560.0" width="30.0" height="40.0" fill="#fff"/><path d="M1300.0 500.00h3.3v2.85h-3.3zM1300.0 503.25h8.2v2.85h-8.2zM1300.0 506.50h8.2v2.85h-8.2zM1300.0 509.75h8.6v2.85h-8.6zM1300.0 513.00h8.0v2.85h-8.0zM1300.0 516.25h8.4v2.85h-8.4zM1300.0 519.50h8.3v2.85h-8.3zM1300.0 522.75h8.5v2.85h-8.5zM1300.0 526.00h7.9v2.85h-7.9zM1300.0 529.25h8.3v2.85h-8.3zM1300.0 532.50h8.1v2.85h-8.1zM1300.0 535.75h7.8v2.85h-7.8zM1300.0 539.00h7.6v2.85h-7.6z" fill="#5a8fe9"/><rect x="1312.5" y="500.0" width="2.2" height="60.0" fill="#333"/><rect x="1299.65" y="561.20" width="27.60" height="37.60" fill="none" stroke="#333" stroke-width="2.35"/><rect x="1294.5" y="560.0" width="4" height="40.0" fill="#e8504a"/><rect x="1407.8" y="479.2" width="30.0" height="80.8" fill="#fff"/><path d="M1409.3 448.00h1.6v2.85h-1.6zM1409.3 451.25h2.4v2.85h-2.4zM1409.3 454.50h4.0v2.85h-4.0zM1409.3 457.75h4.7v2.85h-4.7zM1409.3 461.00h5.7v2.85h-5.7zM1409.3 464.25h7.1v2.85h-7.1zM1409.3 467.50h9.6v2.85h-9.6zM1409.3 470.75h10.2v2.85h-10.2zM1409.3 474.00h11.3v2.85h-11.3zM1409.3 477.25h11.1v2.85h-11.1zM1409.3 480.50h11.1v2.85h-11.1zM1409.3 483.75h9.8v2.85h-9.8zM1409.3 487.00h7.2v2.85h-7.2zM1409.3 490.25h6.6v2.85h-6.6zM1409.3 493.50h7.3v2.85h-7.3zM1409.3 496.75h7.1v2.85h-7.1zM1409.3 500.00h9.8v2.85h-9.8zM1409.3 503.25h12.6v2.85h-12.6zM1409.3 506.50h16.9v2.85h-16.9zM1409.3 509.75h20.4v2.85h-20.4zM1409.3 513.00h23.5v2.85h-23.5zM1409.3 516.25h21.0v2.85h-21.0zM1409.3 519.50h24.5v2.85h-24.5zM1409.3 522.75h25.2v2.85h-25.2zM1409.3 526.00h25.8v2.85h-25.8zM1409.3 529.25h23.1v2.85h-23.1zM1409.3 532.50h23.9v2.85h-23.9zM1409.3 535.75h24.0v2.85h-24.0zM1409.3 539.00h24.1v2.85h-24.1z" fill="#5a8fe9"/><rect x="1421.8" y="448.0" width="2.2" height="31.2" fill="#333"/><rect x="1409.00" y="480.45" width="27.60" height="78.35" fill="none" stroke="#333" stroke-width="2.35"/><rect x="1403.8" y="479.2" width="4" height="80.8" fill="#1f9e87"/><rect x="1444.3" y="340.4" width="30.0" height="124.1" fill="#fff"/><path d="M1445.8 325.00h9.4v2.85h-9.4zM1445.8 328.25h11.3v2.85h-11.3zM1445.8 331.50h12.3v2.85h-12.3zM1445.8 334.75h12.0v2.85h-12.0zM1445.8 338.00h11.3v2.85h-11.3zM1445.8 341.25h11.2v2.85h-11.2zM1445.8 344.50h11.2v2.85h-11.2zM1445.8 347.75h4.7v2.85h-4.7zM1445.8 351.00h4.5v2.85h-4.5zM1445.8 354.25h4.5v2.85h-4.5zM1445.8 357.50h6.1v2.85h-6.1zM1445.8 360.75h9.8v2.85h-9.8zM1445.8 364.00h12.9v2.85h-12.9zM1445.8 367.25h17.1v2.85h-17.1zM1445.8 370.50h21.2v2.85h-21.2zM1445.8 373.75h19.3v2.85h-19.3zM1445.8 377.00h13.3v2.85h-13.3zM1445.8 380.25h8.0v2.85h-8.0zM1445.8 383.50h7.3v2.85h-7.3zM1445.8 386.75h5.5v2.85h-5.5zM1445.8 390.00h4.4v2.85h-4.4zM1445.8 393.25h5.9v2.85h-5.9zM1445.8 396.50h7.2v2.85h-7.2zM1445.8 399.75h8.9v2.85h-8.9zM1445.8 403.00h5.5v2.85h-5.5zM1445.8 406.25h3.2v2.85h-3.2zM1445.8 409.50h3.4v2.85h-3.4zM1445.8 412.75h4.0v2.85h-4.0zM1445.8 416.00h4.4v2.85h-4.4zM1445.8 419.25h4.8v2.85h-4.8zM1445.8 422.50h6.9v2.85h-6.9zM1445.8 425.75h8.2v2.85h-8.2zM1445.8 429.00h12.6v2.85h-12.6zM1445.8 432.25h10.5v2.85h-10.5zM1445.8 435.50h8.7v2.85h-8.7zM1445.8 438.75h7.9v2.85h-7.9zM1445.8 442.00h11.0v2.85h-11.0zM1445.8 445.25h13.8v2.85h-13.8zM1445.8 448.50h13.8v2.85h-13.8zM1445.8 451.75h16.0v2.85h-16.0zM1445.8 455.00h17.0v2.85h-17.0zM1445.8 458.25h18.9v2.85h-18.9zM1445.8 461.50h11.2v2.85h-11.2zM1445.8 464.75h10.8v2.85h-10.8zM1445.8 468.00h11.7v2.85h-11.7zM1445.8 471.25h29.5v2.85h-29.5zM1445.8 474.50h9.6v2.85h-9.6zM1445.8 477.75h10.5v2.85h-10.5zM1445.8 481.00h9.2v2.85h-9.2zM1445.8 484.25h8.9v2.85h-8.9zM1445.8 487.50h9.4v2.85h-9.4zM1445.8 490.75h8.4v2.85h-8.4zM1445.8 494.00h7.0v2.85h-7.0zM1445.8 497.25h6.8v2.85h-6.8zM1445.8 500.50h5.4v2.85h-5.4zM1445.8 503.75h5.4v2.85h-5.4zM1445.8 507.00h7.0v2.85h-7.0zM1445.8 510.25h8.8v2.85h-8.8zM1445.8 513.50h10.2v2.85h-10.2zM1445.8 516.75h9.5v2.85h-9.5zM1445.8 520.00h9.3v2.85h-9.3zM1445.8 523.25h9.1v2.85h-9.1zM1445.8 526.50h9.5v2.85h-9.5zM1445.8 529.75h8.1v2.85h-8.1zM1445.8 533.00h9.0v2.85h-9.0zM1445.8 536.25h7.5v2.85h-7.5zM1445.8 539.50h7.6v2.85h-7.6z" fill="#5a8fe9"/><rect x="1458.3" y="324.8" width="2.2" height="15.6" fill="#333"/><rect x="1458.3" y="464.5" width="2.2" height="95.5" fill="#333"/><rect x="1445.45" y="341.60" width="27.60" height="121.70" fill="none" stroke="#333" stroke-width="2.35"/><rect x="1440.3" y="340.4" width="4" height="124.1" fill="#1f9e87"/><rect x="1480.7" y="271.8" width="30.0" height="65.2" fill="#fff"/><path d="M1482.2 270.00h14.4v2.85h-14.4zM1482.2 273.25h18.8v2.85h-18.8zM1482.2 276.50h22.2v2.85h-22.2zM1482.2 279.75h25.5v2.85h-25.5zM1482.2 283.00h19.9v2.85h-19.9zM1482.2 286.25h12.8v2.85h-12.8zM1482.2 289.50h9.9v2.85h-9.9zM1482.2 292.75h5.7v2.85h-5.7zM1482.2 296.00h4.8v2.85h-4.8zM1482.2 299.25h6.2v2.85h-6.2zM1482.2 302.50h7.4v2.85h-7.4zM1482.2 305.75h7.8v2.85h-7.8zM1482.2 309.00h4.0v2.85h-4.0zM1482.2 312.25h2.8v2.85h-2.8zM1482.2 315.50h3.2v2.85h-3.2zM1482.2 318.75h3.1v2.85h-3.1zM1482.2 322.00h3.1v2.85h-3.1zM1482.2 325.25h2.8v2.85h-2.8zM1482.2 328.50h20.8v2.85h-20.8zM1482.2 331.75h3.4v2.85h-3.4zM1482.2 335.00h4.1v2.85h-4.1zM1482.2 338.25h4.3v2.85h-4.3zM1482.2 341.50h5.7v2.85h-5.7zM1482.2 344.75h7.2v2.85h-7.2zM1482.2 348.00h7.7v2.85h-7.7zM1482.2 351.25h8.3v2.85h-8.3zM1482.2 354.50h9.3v2.85h-9.3zM1482.2 357.75h10.8v2.85h-10.8zM1482.2 361.00h12.0v2.85h-12.0zM1482.2 364.25h11.7v2.85h-11.7zM1482.2 367.50h13.2v2.85h-13.2zM1482.2 370.75h21.1v2.85h-21.1zM1482.2 374.00h15.0v2.85h-15.0zM1482.2 377.25h11.4v2.85h-11.4zM1482.2 380.50h9.6v2.85h-9.6zM1482.2 383.75h8.7v2.85h-8.7zM1482.2 387.00h7.6v2.85h-7.6zM1482.2 390.25h5.5v2.85h-5.5zM1482.2 393.50h2.8v2.85h-2.8z" fill="#5a8fe9"/><rect x="1494.7" y="269.5" width="2.2" height="2.2" fill="#333"/><rect x="1494.7" y="337.0" width="2.2" height="58.8" fill="#333"/><rect x="1481.90" y="272.95" width="27.60" height="62.85" fill="none" stroke="#333" stroke-width="2.35"/><rect x="1476.7" y="271.8" width="4" height="65.2" fill="#1f9e87"/><rect x="1517.2" y="216.4" width="30.0" height="79.2" fill="#fff"/><path d="M1518.7 196.00h4.3v2.85h-4.3zM1518.7 199.25h8.5v2.85h-8.5zM1518.7 202.50h11.2v2.85h-11.2zM1518.7 205.75h18.8v2.85h-18.8zM1518.7 209.00h29.1v2.85h-29.1zM1518.7 212.25h13.1v2.85h-13.1zM1518.7 215.50h15.6v2.85h-15.6zM1518.7 218.75h13.6v2.85h-13.6zM1518.7 222.00h11.8v2.85h-11.8zM1518.7 225.25h11.4v2.85h-11.4zM1518.7 228.50h9.4v2.85h-9.4zM1518.7 231.75h11.5v2.85h-11.5zM1518.7 235.00h13.7v2.85h-13.7zM1518.7 238.25h14.8v2.85h-14.8zM1518.7 241.50h19.4v2.85h-19.4zM1518.7 244.75h23.0v2.85h-23.0zM1518.7 248.00h15.1v2.85h-15.1zM1518.7 251.25h11.1v2.85h-11.1zM1518.7 254.50h8.2v2.85h-8.2zM1518.7 257.75h8.0v2.85h-8.0zM1518.7 261.00h7.5v2.85h-7.5zM1518.7 264.25h8.1v2.85h-8.1zM1518.7 267.50h7.9v2.85h-7.9zM1518.7 270.75h8.0v2.85h-8.0zM1518.7 274.00h7.7v2.85h-7.7zM1518.7 277.25h6.7v2.85h-6.7zM1518.7 280.50h6.5v2.85h-6.5zM1518.7 283.75h6.3v2.85h-6.3zM1518.7 287.00h6.6v2.85h-6.6zM1518.7 290.25h7.1v2.85h-7.1zM1518.7 293.50h8.3v2.85h-8.3zM1518.7 296.75h6.1v2.85h-6.1zM1518.7 300.00h4.2v2.85h-4.2z" fill="#5a8fe9"/><rect x="1531.2" y="150.0" width="2.2" height="66.4" fill="#333"/><rect x="1531.2" y="295.6" width="2.2" height="5.9" fill="#333"/><rect x="1518.35" y="217.60" width="27.60" height="76.80" fill="none" stroke="#333" stroke-width="2.35"/><rect x="1513.2" y="216.4" width="4" height="79.2" fill="#1f9e87"/><rect x="1553.6" y="200.8" width="30.0" height="19.9" fill="#fff"/><path d="M1555.1 196.00h13.7v2.85h-13.7zM1555.1 199.25h23.2v2.85h-23.2zM1555.1 202.50h23.2v2.85h-23.2zM1555.1 205.75h23.9v2.85h-23.9zM1555.1 209.00h23.8v2.85h-23.8zM1555.1 212.25h20.5v2.85h-20.5zM1555.1 215.50h19.0v2.85h-19.0zM1555.1 218.75h13.5v2.85h-13.5zM1555.1 222.00h11.8v2.85h-11.8zM1555.1 225.25h12.5v2.85h-12.5zM1555.1 228.50h25.9v2.85h-25.9zM1555.1 231.75h17.6v2.85h-17.6zM1555.1 235.00h11.5v2.85h-11.5zM1555.1 238.25h9.9v2.85h-9.9zM1555.1 241.50h8.7v2.85h-8.7zM1555.1 244.75h8.2v2.85h-8.2zM1555.1 248.00h5.4v2.85h-5.4zM1555.1 251.25h3.8v2.85h-3.8zM1555.1 254.50h2.1v2.85h-2.1z" fill="#5a8fe9"/><rect x="1567.6" y="150.0" width="2.2" height="50.8" fill="#333"/><rect x="1567.6" y="220.7" width="2.2" height="35.2" fill="#333"/><rect x="1554.80" y="202.00" width="27.60" height="17.50" fill="none" stroke="#333" stroke-width="2.35"/><rect x="1549.6" y="200.8" width="4" height="19.9" fill="#1f9e87"/><rect x="1626.5" y="150.0" width="30.0" height="67.0" fill="#fff"/><path d="M1628.0 196.00h9.9v2.85h-9.9zM1628.0 199.25h11.7v2.85h-11.7zM1628.0 202.50h12.9v2.85h-12.9zM1628.0 205.75h13.0v2.85h-13.0zM1628.0 209.00h14.0v2.85h-14.0zM1628.0 212.25h11.9v2.85h-11.9zM1628.0 215.50h8.0v2.85h-8.0zM1628.0 218.75h5.7v2.85h-5.7z" fill="#5a8fe9"/><rect x="1627.70" y="151.20" width="27.60" height="64.60" fill="none" stroke="#333" stroke-width="2.35"/><rect x="1622.5" y="150.0" width="4" height="67.0" fill="#e8504a"/><polyline points="1422,389.5 1450,388.5 1500,382.5 1549,374 1600,364 1640,356.5" fill="none" stroke="#6cc070" stroke-width="1.2"/></g><rect x="28.5" y="195" width="1670.5" height="1" fill="#e2e2ea"/><rect x="1640" y="196" width="1" height="897" fill="#777"/><defs><clipPath id="cp"><rect x="1641" y="196" width="58" height="791"/></clipPath></defs><g clip-path="url(#cp)"><text x="1646" y="980.5" font-size="12" fill="#333" text-anchor="start" font-weight="normal" >384.00</text><text x="1646" y="948.0" font-size="12" fill="#333" text-anchor="start" font-weight="normal" >386.00</text><text x="1646" y="915.5" font-size="12" fill="#333" text-anchor="start" font-weight="normal" >388.00</text><text x="1646" y="883.0" font-size="12" fill="#333" text-anchor="start" font-weight="normal" >390.00</text><text x="1646" y="850.5" font-size="12" fill="#333" text-anchor="start" font-weight="normal" >392.00</text><text x="1646" y="818.0" font-size="12" fill="#333" text-anchor="start" font-weight="normal" >394.00</text><text x="1646" y="785.5" font-size="12" fill="#333" text-anchor="start" font-weight="normal" >396.00</text><text x="1646" y="753.0" font-size="12" fill="#333" text-anchor="start" font-weight="normal" >398.00</text><text x="1646" y="720.5" font-size="12" fill="#333" text-anchor="start" font-weight="normal" >400.00</text><text x="1646" y="688.0" font-size="12" fill="#333" text-anchor="start" font-weight="normal" >402.00</text><text x="1646" y="655.5" font-size="12" fill="#333" text-anchor="start" font-weight="normal" >404.00</text><text x="1646" y="623.0" font-size="12" fill="#333" text-anchor="start" font-weight="normal" >406.00</text><text x="1646" y="590.5" font-size="12" fill="#333" text-anchor="start" font-weight="normal" >408.00</text><text x="1646" y="558.0" font-size="12" fill="#333" text-anchor="start" font-weight="normal" >410.00</text><text x="1646" y="525.5" font-size="12" fill="#333" text-anchor="start" font-weight="normal" >412.00</text><text x="1646" y="493.0" font-size="12" fill="#333" text-anchor="start" font-weight="normal" >414.00</text><text x="1646" y="460.5" font-size="12" fill="#333" text-anchor="start" font-weight="normal" >416.00</text><text x="1646" y="428.0" font-size="12" fill="#333" text-anchor="start" font-weight="normal" >418.00</text><text x="1646" y="395.5" font-size="12" fill="#333" text-anchor="start" font-weight="normal" >420.00</text><text x="1646" y="330.5" font-size="12" fill="#333" text-anchor="start" font-weight="normal" >424.00</text><text x="1646" y="298.0" font-size="12" fill="#333" text-anchor="start" font-weight="normal" >426.00</text><text x="1646" y="265.5" font-size="12" fill="#333" text-anchor="start" font-weight="normal" >428.00</text><text x="1646" y="233.0" font-size="12" fill="#333" text-anchor="start" font-weight="normal" >430.00</text><text x="1646" y="200.5" font-size="12" fill="#333" text-anchor="start" font-weight="normal" >432.00</text></g><rect x="1681.5" y="197.5" width="10" height="10" fill="#fff" stroke="#555" stroke-width="1"/><text x="1686.5" y="206" font-size="9" fill="#444" text-anchor="middle" font-weight="normal" >F</text><path d="M1641 356 L1648 349.5 H1690 V362.5 H1648 Z" fill="#58b35e"/><text x="1669" y="361" font-size="12" fill="#fff" text-anchor="middle" font-weight="normal" >422.16</text><rect x="1604.5" y="197.5" width="16" height="16" fill="#fff" stroke="#333" stroke-width="1.2"/><path d="M1608.5 201 L1614.5 205.5 L1608.5 210Z" fill="#111"/><rect x="1615" y="201" width="2" height="9" fill="#111"/><rect x="28.5" y="987" width="1655" height="1" fill="#666"/><text x="33" y="1002" font-size="12" fill="#333" text-anchor="start" font-weight="normal" >Volume</text><path d="M28.5 1043.6H53.9V1091.5H28.5zM54.9 1041.8H90.3V1091.5H54.9zM91.3 1044.6H126.8V1091.5H91.3zM127.8 1061.0H163.2V1091.5H127.8zM164.2 1066.0H199.6V1091.5H164.2zM200.6 1033.7H236.1V1091.5H200.6zM237.1 1017.4H272.6V1091.5H237.1zM273.6 1042.5H309.0V1091.5H273.6zM310.0 1058.4H345.4V1091.5H310.0zM346.4 1033.0H381.9V1091.5H346.4zM382.9 992.0H418.4V1091.5H382.9zM419.4 1025.6H454.8V1091.5H419.4zM455.8 1031.0H491.2V1091.5H455.8zM492.2 1005.4H527.7V1091.5H492.2zM528.7 1041.8H564.2V1091.5H528.7zM565.2 1045.7H600.6V1091.5H565.2zM601.6 1052.0H637.1V1091.5H601.6zM638.1 1062.6H673.5V1091.5H638.1zM674.5 1062.6H710.0V1091.5H674.5zM711.0 1057.4H746.4V1091.5H711.0zM747.4 1064.0H782.9V1091.5H747.4zM783.9 1059.5H819.3V1091.5H783.9zM820.3 1057.4H855.8V1091.5H820.3zM856.8 1066.5H892.2V1091.5H856.8zM893.2 1061.0H928.7V1091.5H893.2zM929.7 1065.5H965.1V1091.5H929.7zM966.1 1054.5H1001.6V1091.5H966.1zM1002.6 1056.0H1038.0V1091.5H1002.6zM1039.0 1067.0H1074.5V1091.5H1039.0zM1075.5 1066.5H1110.9V1091.5H1075.5zM1111.9 1063.5H1147.4V1091.5H1111.9zM1148.4 1053.7H1183.8V1091.5H1148.4zM1184.8 1060.7H1220.3V1091.5H1184.8zM1221.3 1055.0H1256.7V1091.5H1221.3zM1257.7 1057.6H1293.2V1091.5H1257.7zM1294.2 1060.7H1329.6V1091.5H1294.2zM1330.6 1056.5H1366.1V1091.5H1330.6zM1367.1 1057.6H1402.5V1091.5H1367.1zM1403.5 1051.2H1439.0V1091.5H1403.5zM1440.0 1053.7H1475.4V1091.5H1440.0zM1476.4 1054.4H1511.9V1091.5H1476.4zM1512.9 1062.5H1548.3V1091.5H1512.9zM1549.3 1061.8H1584.8V1091.5H1549.3zM1585.8 1046.3H1621.2V1091.5H1585.8zM1622.2 1055.0H1640.0V1091.5H1622.2z" fill="#9ccaf9"/><text x="1646" y="1001" font-size="12" fill="#333" text-anchor="start" font-weight="normal" >2171539</text><path d="M1641 1055 L1648 1048.5 H1695 V1061.8 H1648 Z" fill="#9ccaf9"/><text x="1669" y="1060" font-size="12" fill="#fff" text-anchor="middle" font-weight="normal" >7910753</text><rect x="1640" y="1091" width="6" height="1" fill="#444"/><text x="1648" y="1096" font-size="12" fill="#333" text-anchor="start" font-weight="normal" >0</text><rect x="28.5" y="1094.5" width="1612" height="1.2" fill="#777"/><rect x="35.2" y="1095" width="1.2" height="4.5" fill="#555"/><defs><clipPath id="cd"><rect x="28.5" y="1096" width="100" height="20"/></clipPath></defs><g clip-path="url(#cd)"><text x="26.200000000000003" y="1111" font-size="11.6" fill="#333" text-anchor="middle" font-weight="normal" >17 Jul</text></g><rect x="108.1" y="1095" width="1.2" height="4.5" fill="#555"/><text x="100.10000000000001" y="1111" font-size="11.6" fill="#333" text-anchor="middle" font-weight="normal" >19 Jul</text><rect x="181.0" y="1095" width="1.2" height="4.5" fill="#555"/><text x="173.0" y="1111" font-size="11.6" fill="#333" text-anchor="middle" font-weight="normal" >23 Jul</text><rect x="253.9" y="1095" width="1.2" height="4.5" fill="#555"/><text x="245.9" y="1111" font-size="11.6" fill="#333" text-anchor="middle" font-weight="normal" >25 Jul</text><rect x="326.8" y="1095" width="1.2" height="4.5" fill="#555"/><text x="318.8" y="1111" font-size="11.6" fill="#333" text-anchor="middle" font-weight="normal" >29 Jul</text><rect x="399.7" y="1095" width="1.2" height="4.5" fill="#555"/><text x="391.7" y="1111" font-size="11.6" fill="#333" text-anchor="middle" font-weight="normal" >31 Jul</text><rect x="472.6" y="1095" width="1.2" height="4.5" fill="#555"/><text x="464.6" y="1111" font-size="11.6" fill="#333" text-anchor="middle" font-weight="normal" >02 Aug</text><rect x="545.5" y="1095" width="1.2" height="4.5" fill="#555"/><text x="537.5000000000001" y="1111" font-size="11.6" fill="#333" text-anchor="middle" font-weight="normal" >06 Aug</text><rect x="618.4" y="1095" width="1.2" height="4.5" fill="#555"/><text x="610.4000000000001" y="1111" font-size="11.6" fill="#333" text-anchor="middle" font-weight="normal" >08 Aug</text><rect x="691.3" y="1095" width="1.2" height="4.5" fill="#555"/><text x="683.3000000000001" y="1111" font-size="11.6" fill="#333" text-anchor="middle" font-weight="normal" >12 Aug</text><rect x="764.2" y="1095" width="1.2" height="4.5" fill="#555"/><text x="756.2" y="1111" font-size="11.6" fill="#333" text-anchor="middle" font-weight="normal" >14 Aug</text><rect x="837.1" y="1095" width="1.2" height="4.5" fill="#555"/><text x="829.1000000000001" y="1111" font-size="11.6" fill="#333" text-anchor="middle" font-weight="normal" >16 Aug</text><rect x="910.0" y="1095" width="1.2" height="4.5" fill="#555"/><text x="902.0000000000001" y="1111" font-size="11.6" fill="#333" text-anchor="middle" font-weight="normal" >20 Aug</text><rect x="982.9" y="1095" width="1.2" height="4.5" fill="#555"/><text x="974.9000000000001" y="1111" font-size="11.6" fill="#333" text-anchor="middle" font-weight="normal" >22 Aug</text><rect x="1055.8" y="1095" width="1.2" height="4.5" fill="#555"/><text x="1047.8000000000002" y="1111" font-size="11.6" fill="#333" text-anchor="middle" font-weight="normal" >26 Aug</text><rect x="1128.7" y="1095" width="1.2" height="4.5" fill="#555"/><text x="1120.7" y="1111" font-size="11.6" fill="#333" text-anchor="middle" font-weight="normal" >28 Aug</text><rect x="1201.6" y="1095" width="1.2" height="4.5" fill="#555"/><text x="1193.6000000000001" y="1111" font-size="11.6" fill="#333" text-anchor="middle" font-weight="normal" >30 Aug</text><rect x="1274.5" y="1095" width="1.2" height="4.5" fill="#555"/><text x="1266.5000000000002" y="1111" font-size="11.6" fill="#333" text-anchor="middle" font-weight="normal" >04 Sep</text><rect x="1347.4" y="1095" width="1.2" height="4.5" fill="#555"/><text x="1339.4" y="1111" font-size="11.6" fill="#333" text-anchor="middle" font-weight="normal" >06 Sep</text><rect x="1420.3" y="1095" width="1.2" height="4.5" fill="#555"/><text x="1412.3000000000002" y="1111" font-size="11.6" fill="#333" text-anchor="middle" font-weight="normal" >10 Sep</text><rect x="1493.2" y="1095" width="1.2" height="4.5" fill="#555"/><text x="1485.2" y="1111" font-size="11.6" fill="#333" text-anchor="middle" font-weight="normal" >12 Sep</text><rect x="1566.1" y="1095" width="1.2" height="4.5" fill="#555"/><text x="1558.1000000000001" y="1111" font-size="11.6" fill="#333" text-anchor="middle" font-weight="normal" >16 Sep</text><rect x="1639.0" y="1095" width="1.2" height="4.5" fill="#555"/><text x="1631.0000000000002" y="1111" font-size="11.6" fill="#333" text-anchor="middle" font-weight="normal" >18 Sep</text><rect x="28.5" y="1117" width="1670" height="1" fill="#dfdfe6"/><rect x="28.5" y="1118" width="1670" height="23" fill="#f2f2f6"/><path d="M32.5 1129 L37.5 1125 V1133Z" fill="#222"/><rect x="1420" y="1121" width="8" height="16" fill="#c9c9d4"/><path d="M1463 1129 L1458.5 1125 V1133Z" fill="#222"/><rect x="1497" y="1123" width="13" height="13" rx="1.5" fill="none" stroke="#666" stroke-width="1.2"/><path d="M1497 1127h13M1500 1121v3M1507 1121v3" stroke="#666" stroke-width="1.2"/><text x="1576" y="1133" font-size="12" fill="#333" text-anchor="middle" font-weight="normal" >DOM Trader</text><text x="1655" y="1133" font-size="12" fill="#333" text-anchor="middle" font-weight="normal" >Chart Trader</text><rect x="1695" y="167" width="1" height="1000" fill="#d8d8e0"/><rect x="1696" y="167" width="3" height="1031" fill="#ededf2"/><path d="M7 200h14M7 203h14" stroke="#999" stroke-width="1" stroke-dasharray="1.5 1.5"/><path d="M18.92 216.40L20.95 216.66L20.95 218.34L18.92 218.60L18.26 220.20L19.51 221.82L18.32 223.01L16.70 221.76L15.10 222.42L14.84 224.45L13.16 224.45L12.90 222.42L11.30 221.76L9.68 223.01L8.49 221.82L9.74 220.20L9.08 218.60L7.05 218.34L7.05 216.66L9.08 216.40L9.74 214.80L8.49 213.18L9.68 211.99L11.30 213.24L12.90 212.58L13.16 210.55L14.84 210.55L15.10 212.58L16.70 213.24L18.32 211.99L19.51 213.18L18.26 214.80Z" fill="none" stroke="#666" stroke-width="1.2" stroke-linejoin="round"/><circle cx="14" cy="217.5" r="2.24" fill="none" stroke="#666" stroke-width="1.2"/><path d="M12 231.5 L16.5 235 L12 238.5Z" fill="#222"/><path d="M12 292.5 L16.5 296 L12 299.5Z" fill="#222"/><path d="M12 347.0 L16.5 350.5 L12 354.0Z" fill="#222"/><path d="M12 415.5 L16.5 419 L12 422.5Z" fill="#222"/><path d="M12 464.0 L16.5 467.5 L12 471.0Z" fill="#222"/><text font-size="12" fill="#333" transform="translate(9,246) rotate(90)">Volume</text><text font-size="12" fill="#333" transform="translate(9,306) rotate(90)">Trades</text><text font-size="12" fill="#333" transform="translate(9,361) rotate(90)">Bid x Ask</text><text font-size="12" fill="#333" transform="translate(9,428) rotate(90)">Delta</text><rect x="0" y="1141" width="1699" height="57" fill="#ededf2"/><rect x="0" y="1141" width="1699" height="26" fill="#efeff3"/><rect x="3" y="1141" width="1692" height="2" fill="#2479c4"/><rect x="3" y="1143" width="1" height="24" fill="#d5d5de"/><rect x="1695" y="1143" width="1" height="24" fill="#d5d5de"/><rect x="3" y="1166" width="1693" height="1" fill="#d5d5de"/><rect x="860" y="1143" width="100" height="23" fill="#0b78d0"/><text x="9" y="1159" font-size="11.3" fill="#333" text-anchor="start" font-weight="normal" >Positions</text><text x="67" y="1159" font-size="11.3" fill="#333" text-anchor="start" font-weight="normal" >Accounts</text><text x="128" y="1159" font-size="11.3" fill="#333" text-anchor="start" font-weight="normal" >Orders</text><text x="176" y="1159" font-size="11.3" fill="#333" text-anchor="start" font-weight="normal" >Trades</text><text x="222" y="1159" font-size="11.3" fill="#333" text-anchor="start" font-weight="normal" >Statistics</text><text x="282" y="1159" font-size="11.3" fill="#333" text-anchor="start" font-weight="normal" >6E 6 Range X chart</text><text x="394" y="1159" font-size="11.3" fill="#333" text-anchor="start" font-weight="normal" >ES M5 chart</text><text x="469" y="1159" font-size="11.3" fill="#333" text-anchor="start" font-weight="normal" >BTCUSDT 300 Volume chart</text><text x="626" y="1159" font-size="11.3" fill="#333" text-anchor="start" font-weight="normal" >META H1 chart</text><text x="716" y="1159" font-size="11.3" fill="#333" text-anchor="start" font-weight="normal" >ES M1 chart</text><text x="791" y="1159" font-size="11.3" fill="#333" text-anchor="start" font-weight="normal" >6E M1 chart</text><text x="866" y="1159" font-size="11.3" fill="#fff" text-anchor="start" font-weight="normal" >MSFT Daily chart</text><text x="967" y="1159" font-size="11.3" fill="#333" text-anchor="start" font-weight="normal" >AAPL Daily chart</text><rect x="1062" y="1143.5" width="36" height="22" fill="#f6f6f9" stroke="#dcdce4" stroke-width="1"/><path d="M1080 1147.5v14M1073 1154.5h14" stroke="#333" stroke-width="1.5"/><circle cx="15.5" cy="1184" r="2.8" fill="#4caf75"/><text x="24" y="1188.5" font-size="11" fill="#333" text-anchor="start" font-weight="normal" >Server:</text><text x="63" y="1188.5" font-size="11.5" fill="#222" text-anchor="start" font-weight="bold" >E2</text><path d="M86 1187 L90.5 1182.5 L95 1187" fill="none" stroke="#444" stroke-width="1.3"/><path d="M117.07 1182.48L118.95 1182.72L118.95 1184.28L117.07 1184.52L116.45 1186.01L117.61 1187.51L116.51 1188.61L115.01 1187.45L113.52 1188.07L113.28 1189.95L111.72 1189.95L111.48 1188.07L109.99 1187.45L108.49 1188.61L107.39 1187.51L108.55 1186.01L107.93 1184.52L106.05 1184.28L106.05 1182.72L107.93 1182.48L108.55 1180.99L107.39 1179.49L108.49 1178.39L109.99 1179.55L111.48 1178.93L111.72 1177.05L113.28 1177.05L113.52 1178.93L115.01 1179.55L116.51 1178.39L117.61 1179.49L116.45 1180.99Z" fill="none" stroke="#555" stroke-width="1.2" stroke-linejoin="round"/><circle cx="112.5" cy="1183.5" r="2.08" fill="none" stroke="#555" stroke-width="1.2"/><text x="1665" y="1188.5" font-size="11.4" fill="#777" text-anchor="end" font-weight="normal" >v7.0.2.225-beta</text><path d="M1678.5 1177.5h5v5h-5zM1686.5 1177.5h5v5h-5zM1678.5 1185.5h5v5h-5zM1686.5 1185.5h5v5h-5z" fill="none" stroke="#eadb5c" stroke-width="1.2"/><path d="M1693 1196h2M1695 1194v2M1697 1192v4" stroke="#999" stroke-width="1"/><rect x="1024.5" y="521" width="571.0" height="511" fill="#ebebf0" stroke="#2b86cf" stroke-width="2"/><rect x="1025.5" y="522" width="569.0" height="29" fill="#f3f3f7"/><path d="M1029.50 535.00L1033.50 528.00H1041.50L1045.50 535.00L1041.50 542.00H1033.50Z" fill="#222"/><path d="M1033.50 530.40H1040.10L1035.30 539.40H1042.10" fill="none" stroke="#f3f3f7" stroke-width="2.20"/><path d="M1057.5 530 A7 7 0 1 0 1066.5 530" fill="none" stroke="#2e9e2e" stroke-width="2"/><rect x="1061" y="527" width="2" height="8" fill="#2e9e2e"/><rect x="1079" y="526" width="1" height="19" fill="#d0d0d8"/><path d="M1091 529 L1100 535 L1091 541Z" fill="#222"/><rect x="1114.5" y="528.5" width="13" height="13" fill="#a8a8a8"/><text x="1312" y="540" font-size="12.5" fill="#444" text-anchor="middle" font-weight="normal" >Replay</text><path d="M1495 535.5h5M1500.5 531v9" stroke="#222" stroke-width="1.6"/><rect x="1501.5" y="533" width="7" height="5" fill="#222"/><rect x="1525" y="534" width="10" height="2.4" fill="#222"/><rect x="1551" y="530" width="10" height="10" fill="none" stroke="#222" stroke-width="1.4"/><rect x="1551" y="530" width="10" height="2.4" fill="#222"/><path d="M1577 531 l8 8 M1585 531 l-8 8" stroke="#222" stroke-width="1.5"/><rect x="1025.5" y="550" width="569.0" height="10" fill="#e9e9ee"/><rect x="1035" y="561" width="549" height="18" fill="#f3f3f7"/><rect x="1035" y="579" width="549" height="1" fill="#dcdce4"/><text x="1046.5" y="573" font-size="11.3" fill="#3a3a3a" text-anchor="start" font-weight="normal" >Parameters</text><rect x="1035" y="580" width="549" height="90" fill="#ececf1"/><text x="1041.5" y="597" font-size="12" fill="#333" text-anchor="start" font-weight="normal" >Market data type:</text><rect x="1041.5" y="604" width="535.5" height="27.5" rx="3" fill="#fff" stroke="#e4e4ea" stroke-width="1"/><text x="1048.5" y="623" font-size="13.6" fill="#222" text-anchor="start" font-weight="normal" >Ticks and the DOM (Level2)</text><path d="M1565 616h8l-4.0 4.5z" fill="#333"/><text x="1041.5" y="656" font-size="12" fill="#444" text-anchor="start" font-weight="normal" >From:</text><rect x="1075.5" y="637" width="231" height="27" rx="3" fill="#fff" stroke="#e4e4ea" stroke-width="1"/><rect x="1244" y="638" width="62" height="25" fill="#f2f2f6"/><text x="1083" y="656" font-size="13.4" fill="#222" text-anchor="start" font-weight="normal" >16.09.24 13:00</text><rect x="1230.5" y="644" width="10" height="11" rx="1" fill="none" stroke="#888" stroke-width="1.1"/><circle cx="1238" cy="653" r="3.5" fill="#fff" stroke="#888" stroke-width="1.1"/><text x="1248" y="657" font-size="13.4" fill="#333" text-anchor="start" font-weight="normal" >UTC+0</text><path d="M1294 648h7l-3.5 4z" fill="#333"/><text x="1312" y="656" font-size="12" fill="#444" text-anchor="start" font-weight="normal" >To:</text><rect x="1331" y="637" width="247" height="27" rx="3" fill="#fff" stroke="#e4e4ea" stroke-width="1"/><rect x="1483" y="638" width="62" height="25" fill="#f2f2f6"/><text x="1338" y="656" font-size="13.4" fill="#222" text-anchor="start" font-weight="normal" >16.09.24 20:00</text><rect x="1469.5" y="644" width="10" height="11" rx="1" fill="none" stroke="#888" stroke-width="1.1"/><circle cx="1477" cy="653" r="3.5" fill="#fff" stroke="#888" stroke-width="1.1"/><text x="1487" y="657" font-size="13.4" fill="#333" text-anchor="start" font-weight="normal" >UTC+0</text><path d="M1534 648h7l-3.5 4z" fill="#333"/><path d="M1551 646.5 L1555 650.5 L1551 654.5Z M1555.5 646.5 L1559.5 650.5 L1555.5 654.5Z" fill="#222"/><path d="M1565 646.5 L1569 650.5 L1565 654.5Z M1569.5 646.5 L1573.5 650.5 L1569.5 654.5Z" fill="#222"/><rect x="1574" y="646.5" width="1.5" height="8" fill="#222"/><rect x="1035" y="669" width="549" height="1" fill="#dcdce4"/><rect x="1035" y="671" width="549" height="25" fill="#f3f3f7"/><rect x="1035" y="696" width="549" height="1" fill="#dcdce4"/><text x="1046.5" y="690" font-size="11.3" fill="#3a3a3a" text-anchor="start" font-weight="normal" >Instruments</text><rect x="1035" y="697" width="549" height="36" fill="#ececf1"/><rect x="1043.5" y="703.5" width="532" height="22" rx="3" fill="#fff" stroke="#e0e0e6" stroke-width="1"/><text x="1047" y="719" font-size="12" fill="#999" text-anchor="start" font-weight="normal" >Search</text><rect x="1035" y="732.5" width="549" height="32" fill="#c8d4de"/><rect x="1041" y="741" width="13" height="13" fill="#fff"/><text x="1147" y="753" font-size="12.5" fill="#333" text-anchor="middle" font-weight="bold" >Instrument</text><text x="1309" y="753" font-size="12.5" fill="#333" text-anchor="middle" font-weight="bold" >Exchange</text><text x="1463" y="753" font-size="12.5" fill="#333" text-anchor="middle" font-weight="bold" >Number of modules</text><path d="M1536 746h8l-4.0 4.5z" fill="#333"/><rect x="1035" y="764.5" width="549" height="165" fill="#fff"/><rect x="1035" y="788.0" width="549" height="1" fill="#e2e2e8"/><rect x="1042.5" y="770.0" width="14" height="14" fill="#fff" stroke="#dadade" stroke-width="1"/><text x="1070" y="781.0" font-size="12" fill="#333" text-anchor="start" font-weight="normal" >ES</text><text x="1231" y="781.0" font-size="12" fill="#333" text-anchor="start" font-weight="normal" >CME_Ind</text><text x="1549.5" y="781.0" font-size="12" fill="#333" text-anchor="end" font-weight="normal" >2</text><rect x="1035" y="812.0" width="549" height="1" fill="#e2e2e8"/><rect x="1042.5" y="794.0" width="14" height="14" fill="#fff" stroke="#dadade" stroke-width="1"/><text x="1070" y="805.0" font-size="12" fill="#333" text-anchor="start" font-weight="normal" >6E</text><text x="1231" y="805.0" font-size="12" fill="#333" text-anchor="start" font-weight="normal" >CME_Fx</text><text x="1549.5" y="805.0" font-size="12" fill="#333" text-anchor="end" font-weight="normal" >2</text><rect x="1035" y="836.0" width="549" height="1" fill="#e2e2e8"/><rect x="1042.5" y="818.0" width="14" height="14" fill="#fff" stroke="#dadade" stroke-width="1"/><text x="1070" y="829.0" font-size="12" fill="#333" text-anchor="start" font-weight="normal" >MSFT</text><text x="1231" y="829.0" font-size="12" fill="#333" text-anchor="start" font-weight="normal" >NASDAQ</text><text x="1549.5" y="829.0" font-size="12" fill="#333" text-anchor="end" font-weight="normal" >1</text><rect x="1035" y="860.0" width="549" height="1" fill="#e2e2e8"/><rect x="1042.5" y="842.0" width="14" height="14" fill="#fff" stroke="#dadade" stroke-width="1"/><text x="1070" y="853.0" font-size="12" fill="#333" text-anchor="start" font-weight="normal" >AAPL</text><text x="1231" y="853.0" font-size="12" fill="#333" text-anchor="start" font-weight="normal" >NASDAQ</text><text x="1549.5" y="853.0" font-size="12" fill="#333" text-anchor="end" font-weight="normal" >1</text><rect x="1035" y="884.0" width="549" height="1" fill="#e2e2e8"/><rect x="1042.5" y="866.0" width="14" height="14" fill="#fff" stroke="#dadade" stroke-width="1"/><text x="1070" y="877.0" font-size="12" fill="#333" text-anchor="start" font-weight="normal" >META</text><text x="1231" y="877.0" font-size="12" fill="#333" text-anchor="start" font-weight="normal" >NASDAQ</text><text x="1549.5" y="877.0" font-size="12" fill="#333" text-anchor="end" font-weight="normal" >1</text><rect x="1035" y="908.0" width="549" height="1" fill="#e2e2e8"/><rect x="1042.5" y="890.0" width="14" height="14" fill="#fff" stroke="#dadade" stroke-width="1"/><text x="1070" y="901.0" font-size="12" fill="#333" text-anchor="start" font-weight="normal" >BTCUSDT</text><text x="1231" y="901.0" font-size="12" fill="#333" text-anchor="start" font-weight="normal" >BinanceFutures</text><text x="1549.5" y="901.0" font-size="12" fill="#333" text-anchor="end" font-weight="normal" >1</text><rect x="1035" y="561" width="549" height="368" rx="4" fill="none" stroke="#111" stroke-width="2.6"/><text x="1309.5" y="951" font-size="11.7" fill="#3a3a3a" text-anchor="middle" font-weight="normal" >The playback is stopped</text><rect x="1036" y="960" width="547" height="28.5" rx="4" fill="#fff" stroke="#e0e0e6" stroke-width="1"/><text x="1309" y="979" font-size="12" fill="#444" text-anchor="middle" font-weight="normal" >0%</text><text x="1035.5" y="1012.5" font-size="11.1" fill="#3a3a3a" text-anchor="start" font-weight="normal" >Speed</text><rect x="1073" y="1007" width="392" height="2.5" rx="1" fill="#c9c9d0"/><rect x="1280" y="1001" width="5" height="14" rx="1" fill="#111"/><text x="1498" y="1012.5" font-size="12" fill="#333" text-anchor="end" font-weight="normal" >50x</text><rect x="1513.5" y="995.5" width="39" height="24" fill="#f0f0f4" stroke="#dedee6" stroke-width="1"/><rect x="1537" y="996" width="1" height="23" fill="#dedee6"/><path d="M1522 999.5 L1534.5 1007.5 L1522 1015.5Z" fill="#1a3fd6"/><path d="M1541 1005h8l-4.0 4.5z" fill="#222"/><rect x="1558.5" y="995.5" width="25" height="24" fill="#f0f0f4" stroke="#e6e6ec" stroke-width="1"/><rect x="1563" y="1000" width="16" height="15" fill="#f0a48c"/><circle cx="30" cy="99.2" r="15.7" fill="#f5ce0a" stroke="#111" stroke-width="2.1"/><text x="30" y="106.7" font-size="21" font-weight="bold" fill="#111" text-anchor="middle">1</text><circle cx="852" cy="97.5" r="15.7" fill="#f5ce0a" stroke="#111" stroke-width="2.1"/><text x="852" y="105.0" font-size="21" font-weight="bold" fill="#111" text-anchor="middle">2</text><circle cx="996.5" cy="596" r="15.7" fill="#f5ce0a" stroke="#111" stroke-width="2.1"/><text x="996.5" y="603.5" font-size="21" font-weight="bold" fill="#111" text-anchor="middle">3</text><circle cx="1414" cy="558.6" r="15.7" fill="#f5ce0a" stroke="#111" stroke-width="2.1"/><text x="1414" y="566.1" font-size="21" font-weight="bold" fill="#111" text-anchor="middle">4</text><circle cx="1492" cy="957.7" r="15.7" fill="#f5ce0a" stroke="#111" stroke-width="2.1"/><text x="1492" y="965.2" font-size="21" font-weight="bold" fill="#111" text-anchor="middle">5</text><rect x="583.1" y="788" width="2.2" height="240" fill="#111"/><path d="M579.7 792 L584.2 782 L588.7 792Z" fill="#111"/><rect x="618.3" y="747.6" width="2.2" height="281.1" fill="#111"/><path d="M614.9 751.6 L619.4 741.6 L623.9 751.6Z" fill="#111"/><rect x="654.4" y="714.5" width="2.2" height="323.20000000000005" fill="#111"/><path d="M651.0 718.5 L655.5 708.5 L660.0 718.5Z" fill="#111"/><circle cx="583" cy="878.4" r="15.7" fill="#f5ce0a" stroke="#111" stroke-width="2.1"/><text x="583" y="885.9" font-size="21" font-weight="bold" fill="#111" text-anchor="middle">6</text><circle cx="620.3" cy="880.8" r="15.7" fill="#f5ce0a" stroke="#111" stroke-width="2.1"/><text x="620.3" y="888.3" font-size="21" font-weight="bold" fill="#111" text-anchor="middle">7</text><circle cx="655.7" cy="882.6" r="15.7" fill="#f5ce0a" stroke="#111" stroke-width="2.1"/><text x="655.7" y="890.1" font-size="21" font-weight="bold" fill="#111" text-anchor="middle">8</text><path d="M1006 584 C1014 574 1022 559 1033 556 C1040 554.5 1044 552 1050 547" fill="none" stroke="#111" stroke-width="2"/><path d="M1057.5 540.5 L1046.5 545 L1052.5 551Z" fill="#111"/><path d="M1501 971 L1514 986" stroke="#111" stroke-width="2"/><path d="M1518.5 992 L1509.5 987 L1515.5 981.5Z" fill="#111"/></svg></body></html>
